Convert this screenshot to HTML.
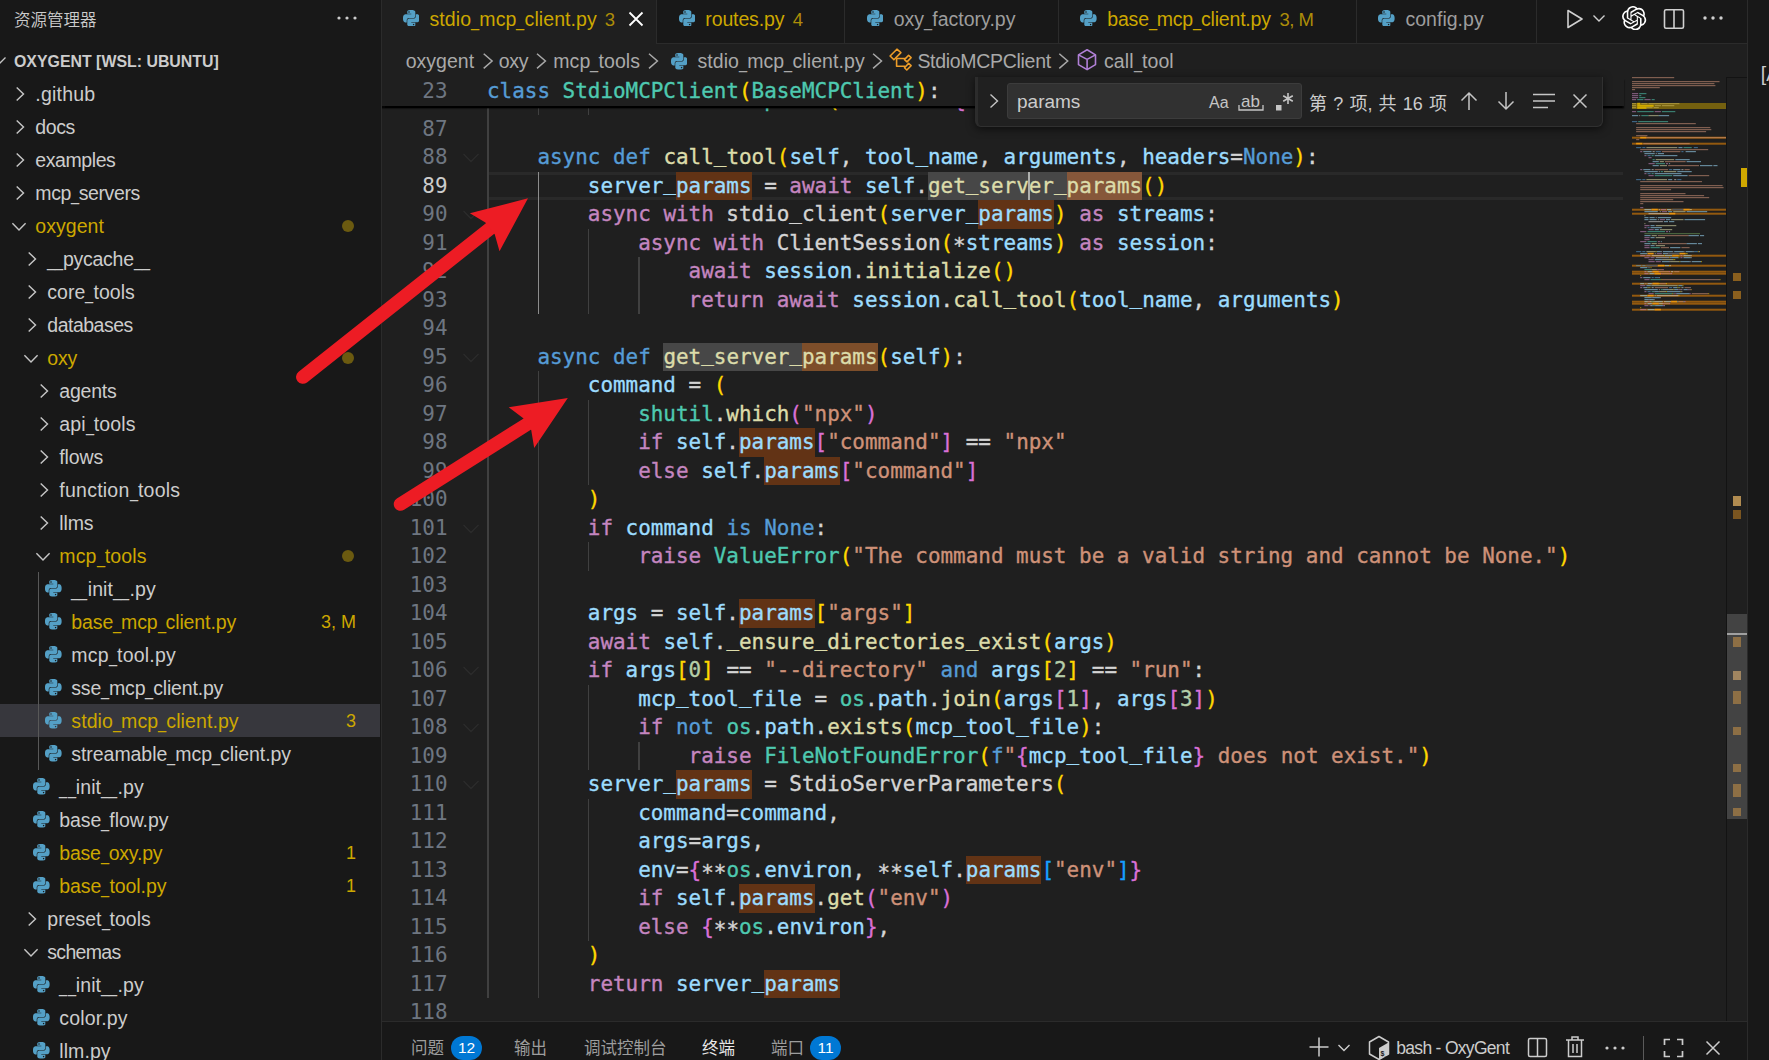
<!DOCTYPE html>
<html lang="zh-CN">
<head>
<meta charset="utf-8">
<title>stdio_mcp_client.py - OxyGent [WSL: Ubuntu] - Visual Studio Code</title>
<style>
*{box-sizing:border-box}
html,body{margin:0;padding:0;background:#181818;overflow:hidden}
body{width:1769px;height:1060px;position:relative;font-family:"Liberation Sans","Noto Sans CJK SC",sans-serif;color:#cccccc;font-size:19px}
.abs{position:absolute}
/* sidebar */
#side{position:absolute;left:0;top:0;width:381px;height:1060px;background:#181818;overflow:hidden}
#sideb{position:absolute;left:381px;top:0;width:1px;height:1060px;background:#2b2b2b;z-index:4}
#side .title{position:absolute;left:14px;top:8.500px;font-size:16.5px;line-height:22px;color:#cccccc;font-weight:350}
#side .more{position:absolute;left:336px;top:16px}
#side .root{position:absolute;left:14px;top:44.5px;height:33px;line-height:33px;font-weight:bold;font-size:15.9px;color:#cccccc;white-space:nowrap}
.row{position:absolute;left:0;width:380px;height:33px;line-height:33px;white-space:nowrap}
.row.sel{background:#37373d}
.row .nm{position:absolute;top:0.5px;font-size:19.5px}
.row .chv{position:absolute;top:6.5px;width:20px;height:20px}
.row .ico{position:absolute;top:8.300px;width:16.6px;height:16.6px}
svg.chev{width:20px;height:20px;display:block}
svg.py{width:16.6px;height:16.6px;display:block}
.row .dot{position:absolute;left:342px;top:10.5px;width:12px;height:12px;border-radius:50%;background:#6b5a10}
.row .bdg{position:absolute;right:24px;top:0.5px;font-size:18px;color:#cca700}
/* editor */
#ed{position:absolute;left:381px;top:0;width:1366px;height:1060px;background:#1f1f1f;overflow:hidden}
#tabs{position:absolute;left:0;top:0;width:1366px;height:44px;background:#181818;border-bottom:1px solid #2b2b2b}
.tab{position:absolute;top:0;height:43px;border-right:1px solid #2b2b2b;white-space:nowrap;font-size:19.5px;line-height:39px}
.tab.active{background:#1f1f1f;height:44px}
.tab .ico{position:absolute;top:9.500px;width:16.6px;height:16.6px}
.tab .lbl{position:absolute;top:0}
#bc{position:absolute;left:0;top:44px;height:33px;line-height:35px;width:1366px;white-space:nowrap;color:#a9a9a9;font-size:19.5px}
#bc>span{position:absolute;top:0}
#sticky{position:absolute;left:0;top:76.5px;width:1243px;height:29.3px;background:#1f1f1f;box-shadow:0 2.5px 1.5px #000000;z-index:3}
.mono{font-family:"DejaVu Sans Mono","Liberation Mono",monospace;font-size:20.93px}
.ln{position:absolute;left:0;width:66.5px;text-align:right;height:28.5px;line-height:28.5px;color:#6e7681;font-family:"DejaVu Sans Mono","Liberation Mono",monospace;font-size:20.93px;}
.ln.act{color:#cccccc}
.cl{position:absolute;left:106px;height:28.5px;line-height:28.5px;white-space:pre;color:#d4d4d4;-webkit-text-stroke:0.35px;font-family:"DejaVu Sans Mono","Liberation Mono",monospace;font-size:20.93px}
.cl span{display:inline-block;height:28.5px;vertical-align:top}
.cl i{font-style:normal;position:relative;top:-2.5px}
.cl b{font-weight:normal;position:relative;top:3.5px}
.hm{background:#623315}
.hw{background:#474747}
.hmw{background:#86573a}
.hmw2{background:#7d4e2a}
.gd{position:absolute;width:1.5px}
#code{position:absolute;left:-381px;top:0;width:1769px;height:1060px}
#code .ln{left:381px}
#code .cl{left:487px}
#curline{position:absolute;left:108px;top:172px;width:1134px;height:28px;border-top:3px solid #292929;border-bottom:3px solid #292929}
/* panel */
#panel{position:absolute;left:0;top:1021px;width:1366px;height:39px;background:#181818;border-top:1px solid #2b2b2b}
#right{position:absolute;left:1747px;top:0;width:22px;height:1060px;background:#181818;border-left:1px solid #2b2b2b}

.bcc{top:7px}
#bc i svg{width:16.6px;height:16.6px;display:block}
#find{position:absolute;left:594px;top:77px;width:628px;height:50px;background:#202020;border:1px solid #303030;border-top:none;border-left:3px solid #2c2c2c;border-radius:0 0 6px 6px;box-shadow:0 2px 8px rgba(0,0,0,.6);z-index:5}
#find .inp{position:absolute;left:29px;top:5.5px;width:295px;height:36.2px;background:#313131;border:1px solid #3c3c3c;border-radius:3px}
#find .q{position:absolute;left:9px;top:0;line-height:35px;font-size:19px;color:#cccccc}
#find .cnt{position:absolute;left:331px;top:0;line-height:54px;font-size:18px;color:#cccccc;white-space:nowrap;word-spacing:1.2px}
#sb{position:absolute;left:1345px;top:76.5px;width:21px;height:944.5px;border-left:1.3px solid #131313;border-top:1.3px solid #131313;z-index:2}
#sb .ov{position:absolute;left:5.700px;width:8px;background:#8a5f1e}
.pt{position:absolute;top:15px;line-height:22px;font-size:16.5px;color:#9d9d9d;white-space:nowrap}
.pb{position:absolute;top:13.500px;width:31px;height:24px;border-radius:12px;background:#0078d4;color:#fff;font-size:15.500px;line-height:24px;text-align:center}
#arrows{position:absolute;left:0;top:0;z-index:10;pointer-events:none}
</style>
</head>
<body>
<div id="side">
  <div class="title">资源管理器</div>
  <svg class="abs" style="left:336px;top:15px" width="22" height="6" viewBox="0 0 22 6"><circle cx="3" cy="3" r="1.600" fill="#cccccc"/><circle cx="11" cy="3" r="1.600" fill="#cccccc"/><circle cx="19" cy="3" r="1.600" fill="#cccccc"/></svg>
  <svg class="abs" style="left:-9px;top:55px" width="16" height="12" viewBox="0 0 16 12"><path d="M1.500 2.500 8 9 14.500 2.500" fill="none" stroke="#c5c5c5" stroke-width="1.300"/></svg>
  <div class="root">OXYGENT [WSL: UBUNTU]</div>
<div class="row" style="top:77px"><span class="chv" style="left:9.5px"><svg class="chev" viewBox="0 0 20 20"><path d="M6.7 3.4 13.5 10 6.7 16.6" fill="none" stroke="#c5c5c5" stroke-width="1.45"/></svg></span><span class="nm" style="left:35.3px;letter-spacing:0.220px;">.github</span></div>
<div class="row" style="top:110px"><span class="chv" style="left:9.5px"><svg class="chev" viewBox="0 0 20 20"><path d="M6.7 3.4 13.5 10 6.7 16.6" fill="none" stroke="#c5c5c5" stroke-width="1.45"/></svg></span><span class="nm" style="left:35.3px;letter-spacing:-0.376px;">docs</span></div>
<div class="row" style="top:143px"><span class="chv" style="left:9.5px"><svg class="chev" viewBox="0 0 20 20"><path d="M6.7 3.4 13.5 10 6.7 16.6" fill="none" stroke="#c5c5c5" stroke-width="1.45"/></svg></span><span class="nm" style="left:35.3px;letter-spacing:-0.421px;">examples</span></div>
<div class="row" style="top:176px"><span class="chv" style="left:9.5px"><svg class="chev" viewBox="0 0 20 20"><path d="M6.7 3.4 13.5 10 6.7 16.6" fill="none" stroke="#c5c5c5" stroke-width="1.45"/></svg></span><span class="nm" style="left:35.3px;letter-spacing:-0.387px;">mcp<span style="display:inline-block;width:8.09px;letter-spacing:0;margin-right:-0.387px;transform:scaleX(0.745);transform-origin:0 0">_</span>servers</span></div>
<div class="row" style="top:209px"><span class="chv" style="left:8.7px"><svg class="chev" viewBox="0 0 20 20"><path d="M3.4 7.3 10 13.9 16.6 7.3" fill="none" stroke="#c5c5c5" stroke-width="1.45"/></svg></span><span class="nm" style="left:35.3px;letter-spacing:0.041px;color:#cca700;">oxygent</span><span class="dot"></span></div>
<div class="row" style="top:242px"><span class="chv" style="left:21.5px"><svg class="chev" viewBox="0 0 20 20"><path d="M6.7 3.4 13.5 10 6.7 16.6" fill="none" stroke="#c5c5c5" stroke-width="1.45"/></svg></span><span class="nm" style="left:47.3px;letter-spacing:-0.259px;"><span style="display:inline-block;width:8.09px;letter-spacing:0;margin-right:-0.259px;transform:scaleX(0.745);transform-origin:0 0">_</span><span style="display:inline-block;width:8.09px;letter-spacing:0;margin-right:-0.259px;transform:scaleX(0.745);transform-origin:0 0">_</span>pycache<span style="display:inline-block;width:8.09px;letter-spacing:0;margin-right:-0.259px;transform:scaleX(0.745);transform-origin:0 0">_</span><span style="display:inline-block;width:8.09px;letter-spacing:0;margin-right:-0.259px;transform:scaleX(0.745);transform-origin:0 0">_</span></span></div>
<div class="row" style="top:275px"><span class="chv" style="left:21.5px"><svg class="chev" viewBox="0 0 20 20"><path d="M6.7 3.4 13.5 10 6.7 16.6" fill="none" stroke="#c5c5c5" stroke-width="1.45"/></svg></span><span class="nm" style="left:47.3px;letter-spacing:0.030px;">core<span style="display:inline-block;width:8.09px;letter-spacing:0;margin-right:0.030px;transform:scaleX(0.745);transform-origin:0 0">_</span>tools</span></div>
<div class="row" style="top:308px"><span class="chv" style="left:21.5px"><svg class="chev" viewBox="0 0 20 20"><path d="M6.7 3.4 13.5 10 6.7 16.6" fill="none" stroke="#c5c5c5" stroke-width="1.45"/></svg></span><span class="nm" style="left:47.3px;letter-spacing:-0.500px;">databases</span></div>
<div class="row" style="top:341px"><span class="chv" style="left:20.7px"><svg class="chev" viewBox="0 0 20 20"><path d="M3.4 7.3 10 13.9 16.6 7.3" fill="none" stroke="#c5c5c5" stroke-width="1.45"/></svg></span><span class="nm" style="left:47.3px;letter-spacing:-0.186px;color:#cca700;">oxy</span><span class="dot"></span></div>
<div class="row" style="top:374px"><span class="chv" style="left:33.5px"><svg class="chev" viewBox="0 0 20 20"><path d="M6.7 3.4 13.5 10 6.7 16.6" fill="none" stroke="#c5c5c5" stroke-width="1.45"/></svg></span><span class="nm" style="left:59.3px;letter-spacing:-0.227px;">agents</span></div>
<div class="row" style="top:407px"><span class="chv" style="left:33.5px"><svg class="chev" viewBox="0 0 20 20"><path d="M6.7 3.4 13.5 10 6.7 16.6" fill="none" stroke="#c5c5c5" stroke-width="1.45"/></svg></span><span class="nm" style="left:59.3px;letter-spacing:0.100px;">api<span style="display:inline-block;width:8.09px;letter-spacing:0;margin-right:0.100px;transform:scaleX(0.745);transform-origin:0 0">_</span>tools</span></div>
<div class="row" style="top:440px"><span class="chv" style="left:33.5px"><svg class="chev" viewBox="0 0 20 20"><path d="M6.7 3.4 13.5 10 6.7 16.6" fill="none" stroke="#c5c5c5" stroke-width="1.45"/></svg></span><span class="nm" style="left:59.3px;letter-spacing:-0.107px;">flows</span></div>
<div class="row" style="top:473px"><span class="chv" style="left:33.5px"><svg class="chev" viewBox="0 0 20 20"><path d="M6.7 3.4 13.5 10 6.7 16.6" fill="none" stroke="#c5c5c5" stroke-width="1.45"/></svg></span><span class="nm" style="left:59.3px;letter-spacing:0.245px;">function<span style="display:inline-block;width:8.09px;letter-spacing:0;margin-right:0.245px;transform:scaleX(0.745);transform-origin:0 0">_</span>tools</span></div>
<div class="row" style="top:506px"><span class="chv" style="left:33.5px"><svg class="chev" viewBox="0 0 20 20"><path d="M6.7 3.4 13.5 10 6.7 16.6" fill="none" stroke="#c5c5c5" stroke-width="1.45"/></svg></span><span class="nm" style="left:59.3px;letter-spacing:-0.143px;">llms</span></div>
<div class="row" style="top:539px"><span class="chv" style="left:32.7px"><svg class="chev" viewBox="0 0 20 20"><path d="M3.4 7.3 10 13.9 16.6 7.3" fill="none" stroke="#c5c5c5" stroke-width="1.45"/></svg></span><span class="nm" style="left:59.3px;letter-spacing:0.144px;color:#cca700;">mcp<span style="display:inline-block;width:8.09px;letter-spacing:0;margin-right:0.144px;transform:scaleX(0.745);transform-origin:0 0">_</span>tools</span><span class="dot"></span></div>
<div class="row" style="top:572px"><span class="ico" style="left:45px"><svg class="py" viewBox="0 0 24 24"><path fill="#54a0c6" d="M14.25.18l.9.2.73.26.59.3.45.32.34.34.25.34.16.33.1.3.04.26.02.2-.01.13V8.5l-.05.63-.13.55-.21.46-.26.38-.3.31-.33.25-.35.19-.35.14-.33.1-.3.07-.26.04-.21.02H8.77l-.69.05-.59.14-.5.22-.41.27-.33.32-.27.35-.2.36-.15.37-.1.35-.07.32-.04.27-.02.21v3.06H3.17l-.21-.03-.28-.07-.32-.12-.35-.18-.36-.26-.36-.36-.35-.46-.32-.59-.28-.73-.21-.88-.14-1.05-.05-1.23.06-1.22.16-1.04.24-.87.32-.71.36-.57.4-.44.42-.33.42-.24.4-.16.36-.1.32-.05.24-.01h.16l.06.01h8.16v-.83H6.18l-.01-2.75-.02-.37.05-.34.11-.31.17-.28.25-.26.31-.23.38-.2.44-.18.51-.15.58-.12.64-.1.71-.06.77-.04.84-.02 1.27.05zm-6.3 1.98l-.23.33-.08.41.08.41.23.34.33.22.41.09.41-.09.33-.22.23-.34.08-.41-.08-.41-.23-.33-.33-.22-.41-.09-.41.09zm13.09 3.95l.28.06.32.12.35.18.36.27.36.35.35.47.32.59.28.73.21.88.14 1.04.05 1.23-.06 1.23-.16 1.04-.24.86-.32.71-.36.57-.4.45-.42.33-.42.24-.4.16-.36.09-.32.05-.24.02-.16-.01h-8.22v.82h5.84l.01 2.76.02.36-.05.34-.11.31-.17.29-.25.25-.31.24-.38.2-.44.17-.51.15-.58.13-.64.09-.71.07-.77.04-.84.01-1.27-.04-1.07-.14-.9-.2-.73-.25-.59-.3-.45-.33-.34-.34-.25-.34-.16-.33-.1-.3-.04-.25-.02-.2.01-.13v-5.34l.05-.64.13-.54.21-.46.26-.38.3-.32.33-.24.35-.2.35-.14.33-.1.3-.06.26-.04.21-.02.13-.01h5.84l.69-.05.59-.14.5-.21.41-.28.33-.32.27-.35.2-.36.15-.36.1-.35.07-.32.04-.28.02-.21V6.07h2.09l.14.01zm-6.47 14.25l-.23.33-.08.41.08.41.23.33.33.23.41.08.41-.08.33-.23.23-.33.08-.41-.08-.41-.23-.33-.33-.23-.41-.08-.41.08z"/></svg></span><span class="nm" style="left:71.3px;letter-spacing:0.122px;"><span style="display:inline-block;width:8.09px;letter-spacing:0;margin-right:0.122px;transform:scaleX(0.745);transform-origin:0 0">_</span><span style="display:inline-block;width:8.09px;letter-spacing:0;margin-right:0.122px;transform:scaleX(0.745);transform-origin:0 0">_</span>init<span style="display:inline-block;width:8.09px;letter-spacing:0;margin-right:0.122px;transform:scaleX(0.745);transform-origin:0 0">_</span><span style="display:inline-block;width:8.09px;letter-spacing:0;margin-right:0.122px;transform:scaleX(0.745);transform-origin:0 0">_</span>.py</span></div>
<div class="row" style="top:605px"><span class="ico" style="left:45px"><svg class="py" viewBox="0 0 24 24"><path fill="#54a0c6" d="M14.25.18l.9.2.73.26.59.3.45.32.34.34.25.34.16.33.1.3.04.26.02.2-.01.13V8.5l-.05.63-.13.55-.21.46-.26.38-.3.31-.33.25-.35.19-.35.14-.33.1-.3.07-.26.04-.21.02H8.77l-.69.05-.59.14-.5.22-.41.27-.33.32-.27.35-.2.36-.15.37-.1.35-.07.32-.04.27-.02.21v3.06H3.17l-.21-.03-.28-.07-.32-.12-.35-.18-.36-.26-.36-.36-.35-.46-.32-.59-.28-.73-.21-.88-.14-1.05-.05-1.23.06-1.22.16-1.04.24-.87.32-.71.36-.57.4-.44.42-.33.42-.24.4-.16.36-.1.32-.05.24-.01h.16l.06.01h8.16v-.83H6.18l-.01-2.75-.02-.37.05-.34.11-.31.17-.28.25-.26.31-.23.38-.2.44-.18.51-.15.58-.12.64-.1.71-.06.77-.04.84-.02 1.27.05zm-6.3 1.98l-.23.33-.08.41.08.41.23.34.33.22.41.09.41-.09.33-.22.23-.34.08-.41-.08-.41-.23-.33-.33-.22-.41-.09-.41.09zm13.09 3.95l.28.06.32.12.35.18.36.27.36.35.35.47.32.59.28.73.21.88.14 1.04.05 1.23-.06 1.23-.16 1.04-.24.86-.32.71-.36.57-.4.45-.42.33-.42.24-.4.16-.36.09-.32.05-.24.02-.16-.01h-8.22v.82h5.84l.01 2.76.02.36-.05.34-.11.31-.17.29-.25.25-.31.24-.38.2-.44.17-.51.15-.58.13-.64.09-.71.07-.77.04-.84.01-1.27-.04-1.07-.14-.9-.2-.73-.25-.59-.3-.45-.33-.34-.34-.25-.34-.16-.33-.1-.3-.04-.25-.02-.2.01-.13v-5.34l.05-.64.13-.54.21-.46.26-.38.3-.32.33-.24.35-.2.35-.14.33-.1.3-.06.26-.04.21-.02.13-.01h5.84l.69-.05.59-.14.5-.21.41-.28.33-.32.27-.35.2-.36.15-.36.1-.35.07-.32.04-.28.02-.21V6.07h2.09l.14.01zm-6.47 14.25l-.23.33-.08.41.08.41.23.33.33.23.41.08.41-.08.33-.23.23-.33.08-.41-.08-.41-.23-.33-.33-.23-.41-.08-.41.08z"/></svg></span><span class="nm" style="left:71.3px;letter-spacing:-0.118px;color:#cca700;">base<span style="display:inline-block;width:8.09px;letter-spacing:0;margin-right:-0.118px;transform:scaleX(0.745);transform-origin:0 0">_</span>mcp<span style="display:inline-block;width:8.09px;letter-spacing:0;margin-right:-0.118px;transform:scaleX(0.745);transform-origin:0 0">_</span>client.py</span><span class="bdg">3, M</span></div>
<div class="row" style="top:638px"><span class="ico" style="left:45px"><svg class="py" viewBox="0 0 24 24"><path fill="#54a0c6" d="M14.25.18l.9.2.73.26.59.3.45.32.34.34.25.34.16.33.1.3.04.26.02.2-.01.13V8.5l-.05.63-.13.55-.21.46-.26.38-.3.31-.33.25-.35.19-.35.14-.33.1-.3.07-.26.04-.21.02H8.77l-.69.05-.59.14-.5.22-.41.27-.33.32-.27.35-.2.36-.15.37-.1.35-.07.32-.04.27-.02.21v3.06H3.17l-.21-.03-.28-.07-.32-.12-.35-.18-.36-.26-.36-.36-.35-.46-.32-.59-.28-.73-.21-.88-.14-1.05-.05-1.23.06-1.22.16-1.04.24-.87.32-.71.36-.57.4-.44.42-.33.42-.24.4-.16.36-.1.32-.05.24-.01h.16l.06.01h8.16v-.83H6.18l-.01-2.75-.02-.37.05-.34.11-.31.17-.28.25-.26.31-.23.38-.2.44-.18.51-.15.58-.12.64-.1.71-.06.77-.04.84-.02 1.27.05zm-6.3 1.98l-.23.33-.08.41.08.41.23.34.33.22.41.09.41-.09.33-.22.23-.34.08-.41-.08-.41-.23-.33-.33-.22-.41-.09-.41.09zm13.09 3.95l.28.06.32.12.35.18.36.27.36.35.35.47.32.59.28.73.21.88.14 1.04.05 1.23-.06 1.23-.16 1.04-.24.86-.32.71-.36.57-.4.45-.42.33-.42.24-.4.16-.36.09-.32.05-.24.02-.16-.01h-8.22v.82h5.84l.01 2.76.02.36-.05.34-.11.31-.17.29-.25.25-.31.24-.38.2-.44.17-.51.15-.58.13-.64.09-.71.07-.77.04-.84.01-1.27-.04-1.07-.14-.9-.2-.73-.25-.59-.3-.45-.33-.34-.34-.25-.34-.16-.33-.1-.3-.04-.25-.02-.2.01-.13v-5.34l.05-.64.13-.54.21-.46.26-.38.3-.32.33-.24.35-.2.35-.14.33-.1.3-.06.26-.04.21-.02.13-.01h5.84l.69-.05.59-.14.5-.21.41-.28.33-.32.27-.35.2-.36.15-.36.1-.35.07-.32.04-.28.02-.21V6.07h2.09l.14.01zm-6.47 14.25l-.23.33-.08.41.08.41.23.33.33.23.41.08.41-.08.33-.23.23-.33.08-.41-.08-.41-.23-.33-.33-.23-.41-.08-.41.08z"/></svg></span><span class="nm" style="left:71.3px;letter-spacing:0.202px;">mcp<span style="display:inline-block;width:8.09px;letter-spacing:0;margin-right:0.202px;transform:scaleX(0.745);transform-origin:0 0">_</span>tool.py</span></div>
<div class="row" style="top:671px"><span class="ico" style="left:45px"><svg class="py" viewBox="0 0 24 24"><path fill="#54a0c6" d="M14.25.18l.9.2.73.26.59.3.45.32.34.34.25.34.16.33.1.3.04.26.02.2-.01.13V8.5l-.05.63-.13.55-.21.46-.26.38-.3.31-.33.25-.35.19-.35.14-.33.1-.3.07-.26.04-.21.02H8.77l-.69.05-.59.14-.5.22-.41.27-.33.32-.27.35-.2.36-.15.37-.1.35-.07.32-.04.27-.02.21v3.06H3.17l-.21-.03-.28-.07-.32-.12-.35-.18-.36-.26-.36-.36-.35-.46-.32-.59-.28-.73-.21-.88-.14-1.05-.05-1.23.06-1.22.16-1.04.24-.87.32-.71.36-.57.4-.44.42-.33.42-.24.4-.16.36-.1.32-.05.24-.01h.16l.06.01h8.16v-.83H6.18l-.01-2.75-.02-.37.05-.34.11-.31.17-.28.25-.26.31-.23.38-.2.44-.18.51-.15.58-.12.64-.1.71-.06.77-.04.84-.02 1.27.05zm-6.3 1.98l-.23.33-.08.41.08.41.23.34.33.22.41.09.41-.09.33-.22.23-.34.08-.41-.08-.41-.23-.33-.33-.22-.41-.09-.41.09zm13.09 3.95l.28.06.32.12.35.18.36.27.36.35.35.47.32.59.28.73.21.88.14 1.04.05 1.23-.06 1.23-.16 1.04-.24.86-.32.71-.36.57-.4.45-.42.33-.42.24-.4.16-.36.09-.32.05-.24.02-.16-.01h-8.22v.82h5.84l.01 2.76.02.36-.05.34-.11.31-.17.29-.25.25-.31.24-.38.2-.44.17-.51.15-.58.13-.64.09-.71.07-.77.04-.84.01-1.27-.04-1.07-.14-.9-.2-.73-.25-.59-.3-.45-.33-.34-.34-.25-.34-.16-.33-.1-.3-.04-.25-.02-.2.01-.13v-5.34l.05-.64.13-.54.21-.46.26-.38.3-.32.33-.24.35-.2.35-.14.33-.1.3-.06.26-.04.21-.02.13-.01h5.84l.69-.05.59-.14.5-.21.41-.28.33-.32.27-.35.2-.36.15-.36.1-.35.07-.32.04-.28.02-.21V6.07h2.09l.14.01zm-6.47 14.25l-.23.33-.08.41.08.41.23.33.33.23.41.08.41-.08.33-.23.23-.33.08-.41-.08-.41-.23-.33-.33-.23-.41-.08-.41.08z"/></svg></span><span class="nm" style="left:71.3px;letter-spacing:-0.182px;">sse<span style="display:inline-block;width:8.09px;letter-spacing:0;margin-right:-0.182px;transform:scaleX(0.745);transform-origin:0 0">_</span>mcp<span style="display:inline-block;width:8.09px;letter-spacing:0;margin-right:-0.182px;transform:scaleX(0.745);transform-origin:0 0">_</span>client.py</span></div>
<div class="row sel" style="top:704px"><span class="ico" style="left:45px"><svg class="py" viewBox="0 0 24 24"><path fill="#54a0c6" d="M14.25.18l.9.2.73.26.59.3.45.32.34.34.25.34.16.33.1.3.04.26.02.2-.01.13V8.5l-.05.63-.13.55-.21.46-.26.38-.3.31-.33.25-.35.19-.35.14-.33.1-.3.07-.26.04-.21.02H8.77l-.69.05-.59.14-.5.22-.41.27-.33.32-.27.35-.2.36-.15.37-.1.35-.07.32-.04.27-.02.21v3.06H3.17l-.21-.03-.28-.07-.32-.12-.35-.18-.36-.26-.36-.36-.35-.46-.32-.59-.28-.73-.21-.88-.14-1.05-.05-1.23.06-1.22.16-1.04.24-.87.32-.71.36-.57.4-.44.42-.33.42-.24.4-.16.36-.1.32-.05.24-.01h.16l.06.01h8.16v-.83H6.18l-.01-2.75-.02-.37.05-.34.11-.31.17-.28.25-.26.31-.23.38-.2.44-.18.51-.15.58-.12.64-.1.71-.06.77-.04.84-.02 1.27.05zm-6.3 1.98l-.23.33-.08.41.08.41.23.34.33.22.41.09.41-.09.33-.22.23-.34.08-.41-.08-.41-.23-.33-.33-.22-.41-.09-.41.09zm13.09 3.95l.28.06.32.12.35.18.36.27.36.35.35.47.32.59.28.73.21.88.14 1.04.05 1.23-.06 1.23-.16 1.04-.24.86-.32.71-.36.57-.4.45-.42.33-.42.24-.4.16-.36.09-.32.05-.24.02-.16-.01h-8.22v.82h5.84l.01 2.76.02.36-.05.34-.11.31-.17.29-.25.25-.31.24-.38.2-.44.17-.51.15-.58.13-.64.09-.71.07-.77.04-.84.01-1.27-.04-1.07-.14-.9-.2-.73-.25-.59-.3-.45-.33-.34-.34-.25-.34-.16-.33-.1-.3-.04-.25-.02-.2.01-.13v-5.34l.05-.64.13-.54.21-.46.26-.38.3-.32.33-.24.35-.2.35-.14.33-.1.3-.06.26-.04.21-.02.13-.01h5.84l.69-.05.59-.14.5-.21.41-.28.33-.32.27-.35.2-.36.15-.36.1-.35.07-.32.04-.28.02-.21V6.07h2.09l.14.01zm-6.47 14.25l-.23.33-.08.41.08.41.23.33.33.23.41.08.41-.08.33-.23.23-.33.08-.41-.08-.41-.23-.33-.33-.23-.41-.08-.41.08z"/></svg></span><span class="nm" style="left:71.3px;letter-spacing:0.088px;color:#cca700;">stdio<span style="display:inline-block;width:8.09px;letter-spacing:0;margin-right:0.088px;transform:scaleX(0.745);transform-origin:0 0">_</span>mcp<span style="display:inline-block;width:8.09px;letter-spacing:0;margin-right:0.088px;transform:scaleX(0.745);transform-origin:0 0">_</span>client.py</span><span class="bdg">3</span></div>
<div class="row" style="top:737px"><span class="ico" style="left:45px"><svg class="py" viewBox="0 0 24 24"><path fill="#54a0c6" d="M14.25.18l.9.2.73.26.59.3.45.32.34.34.25.34.16.33.1.3.04.26.02.2-.01.13V8.5l-.05.63-.13.55-.21.46-.26.38-.3.31-.33.25-.35.19-.35.14-.33.1-.3.07-.26.04-.21.02H8.77l-.69.05-.59.14-.5.22-.41.27-.33.32-.27.35-.2.36-.15.37-.1.35-.07.32-.04.27-.02.21v3.06H3.17l-.21-.03-.28-.07-.32-.12-.35-.18-.36-.26-.36-.36-.35-.46-.32-.59-.28-.73-.21-.88-.14-1.05-.05-1.23.06-1.22.16-1.04.24-.87.32-.71.36-.57.4-.44.42-.33.42-.24.4-.16.36-.1.32-.05.24-.01h.16l.06.01h8.16v-.83H6.18l-.01-2.75-.02-.37.05-.34.11-.31.17-.28.25-.26.31-.23.38-.2.44-.18.51-.15.58-.12.64-.1.71-.06.77-.04.84-.02 1.27.05zm-6.3 1.98l-.23.33-.08.41.08.41.23.34.33.22.41.09.41-.09.33-.22.23-.34.08-.41-.08-.41-.23-.33-.33-.22-.41-.09-.41.09zm13.09 3.95l.28.06.32.12.35.18.36.27.36.35.35.47.32.59.28.73.21.88.14 1.04.05 1.23-.06 1.23-.16 1.04-.24.86-.32.71-.36.57-.4.45-.42.33-.42.24-.4.16-.36.09-.32.05-.24.02-.16-.01h-8.22v.82h5.84l.01 2.76.02.36-.05.34-.11.31-.17.29-.25.25-.31.24-.38.2-.44.17-.51.15-.58.13-.64.09-.71.07-.77.04-.84.01-1.27-.04-1.07-.14-.9-.2-.73-.25-.59-.3-.45-.33-.34-.34-.25-.34-.16-.33-.1-.3-.04-.25-.02-.2.01-.13v-5.34l.05-.64.13-.54.21-.46.26-.38.3-.32.33-.24.35-.2.35-.14.33-.1.3-.06.26-.04.21-.02.13-.01h5.84l.69-.05.59-.14.5-.21.41-.28.33-.32.27-.35.2-.36.15-.36.1-.35.07-.32.04-.28.02-.21V6.07h2.09l.14.01zm-6.47 14.25l-.23.33-.08.41.08.41.23.33.33.23.41.08.41-.08.33-.23.23-.33.08-.41-.08-.41-.23-.33-.33-.23-.41-.08-.41.08z"/></svg></span><span class="nm" style="left:71.3px;letter-spacing:-0.054px;">streamable<span style="display:inline-block;width:8.09px;letter-spacing:0;margin-right:-0.054px;transform:scaleX(0.745);transform-origin:0 0">_</span>mcp<span style="display:inline-block;width:8.09px;letter-spacing:0;margin-right:-0.054px;transform:scaleX(0.745);transform-origin:0 0">_</span>client.py</span></div>
<div class="row" style="top:770px"><span class="ico" style="left:33px"><svg class="py" viewBox="0 0 24 24"><path fill="#54a0c6" d="M14.25.18l.9.2.73.26.59.3.45.32.34.34.25.34.16.33.1.3.04.26.02.2-.01.13V8.5l-.05.63-.13.55-.21.46-.26.38-.3.31-.33.25-.35.19-.35.14-.33.1-.3.07-.26.04-.21.02H8.77l-.69.05-.59.14-.5.22-.41.27-.33.32-.27.35-.2.36-.15.37-.1.35-.07.32-.04.27-.02.21v3.06H3.17l-.21-.03-.28-.07-.32-.12-.35-.18-.36-.26-.36-.36-.35-.46-.32-.59-.28-.73-.21-.88-.14-1.05-.05-1.23.06-1.22.16-1.04.24-.87.32-.71.36-.57.4-.44.42-.33.42-.24.4-.16.36-.1.32-.05.24-.01h.16l.06.01h8.16v-.83H6.18l-.01-2.75-.02-.37.05-.34.11-.31.17-.28.25-.26.31-.23.38-.2.44-.18.51-.15.58-.12.64-.1.71-.06.77-.04.84-.02 1.27.05zm-6.3 1.98l-.23.33-.08.41.08.41.23.34.33.22.41.09.41-.09.33-.22.23-.34.08-.41-.08-.41-.23-.33-.33-.22-.41-.09-.41.09zm13.09 3.95l.28.06.32.12.35.18.36.27.36.35.35.47.32.59.28.73.21.88.14 1.04.05 1.23-.06 1.23-.16 1.04-.24.86-.32.71-.36.57-.4.45-.42.33-.42.24-.4.16-.36.09-.32.05-.24.02-.16-.01h-8.22v.82h5.84l.01 2.76.02.36-.05.34-.11.31-.17.29-.25.25-.31.24-.38.2-.44.17-.51.15-.58.13-.64.09-.71.07-.77.04-.84.01-1.27-.04-1.07-.14-.9-.2-.73-.25-.59-.3-.45-.33-.34-.34-.25-.34-.16-.33-.1-.3-.04-.25-.02-.2.01-.13v-5.34l.05-.64.13-.54.21-.46.26-.38.3-.32.33-.24.35-.2.35-.14.33-.1.3-.06.26-.04.21-.02.13-.01h5.84l.69-.05.59-.14.5-.21.41-.28.33-.32.27-.35.2-.36.15-.36.1-.35.07-.32.04-.28.02-.21V6.07h2.09l.14.01zm-6.47 14.25l-.23.33-.08.41.08.41.23.33.33.23.41.08.41-.08.33-.23.23-.33.08-.41-.08-.41-.23-.33-.33-.23-.41-.08-.41.08z"/></svg></span><span class="nm" style="left:59.3px;letter-spacing:0.131px;"><span style="display:inline-block;width:8.09px;letter-spacing:0;margin-right:0.131px;transform:scaleX(0.745);transform-origin:0 0">_</span><span style="display:inline-block;width:8.09px;letter-spacing:0;margin-right:0.131px;transform:scaleX(0.745);transform-origin:0 0">_</span>init<span style="display:inline-block;width:8.09px;letter-spacing:0;margin-right:0.131px;transform:scaleX(0.745);transform-origin:0 0">_</span><span style="display:inline-block;width:8.09px;letter-spacing:0;margin-right:0.131px;transform:scaleX(0.745);transform-origin:0 0">_</span>.py</span></div>
<div class="row" style="top:803px"><span class="ico" style="left:33px"><svg class="py" viewBox="0 0 24 24"><path fill="#54a0c6" d="M14.25.18l.9.2.73.26.59.3.45.32.34.34.25.34.16.33.1.3.04.26.02.2-.01.13V8.5l-.05.63-.13.55-.21.46-.26.38-.3.31-.33.25-.35.19-.35.14-.33.1-.3.07-.26.04-.21.02H8.77l-.69.05-.59.14-.5.22-.41.27-.33.32-.27.35-.2.36-.15.37-.1.35-.07.32-.04.27-.02.21v3.06H3.17l-.21-.03-.28-.07-.32-.12-.35-.18-.36-.26-.36-.36-.35-.46-.32-.59-.28-.73-.21-.88-.14-1.05-.05-1.23.06-1.22.16-1.04.24-.87.32-.71.36-.57.4-.44.42-.33.42-.24.4-.16.36-.1.32-.05.24-.01h.16l.06.01h8.16v-.83H6.18l-.01-2.75-.02-.37.05-.34.11-.31.17-.28.25-.26.31-.23.38-.2.44-.18.51-.15.58-.12.64-.1.71-.06.77-.04.84-.02 1.27.05zm-6.3 1.98l-.23.33-.08.41.08.41.23.34.33.22.41.09.41-.09.33-.22.23-.34.08-.41-.08-.41-.23-.33-.33-.22-.41-.09-.41.09zm13.09 3.95l.28.06.32.12.35.18.36.27.36.35.35.47.32.59.28.73.21.88.14 1.04.05 1.23-.06 1.23-.16 1.04-.24.86-.32.71-.36.57-.4.45-.42.33-.42.24-.4.16-.36.09-.32.05-.24.02-.16-.01h-8.22v.82h5.84l.01 2.76.02.36-.05.34-.11.31-.17.29-.25.25-.31.24-.38.2-.44.17-.51.15-.58.13-.64.09-.71.07-.77.04-.84.01-1.27-.04-1.07-.14-.9-.2-.73-.25-.59-.3-.45-.33-.34-.34-.25-.34-.16-.33-.1-.3-.04-.25-.02-.2.01-.13v-5.34l.05-.64.13-.54.21-.46.26-.38.3-.32.33-.24.35-.2.35-.14.33-.1.3-.06.26-.04.21-.02.13-.01h5.84l.69-.05.59-.14.5-.21.41-.28.33-.32.27-.35.2-.36.15-.36.1-.35.07-.32.04-.28.02-.21V6.07h2.09l.14.01zm-6.47 14.25l-.23.33-.08.41.08.41.23.33.33.23.41.08.41-.08.33-.23.23-.33.08-.41-.08-.41-.23-.33-.33-.23-.41-.08-.41.08z"/></svg></span><span class="nm" style="left:59.3px;letter-spacing:-0.074px;">base<span style="display:inline-block;width:8.09px;letter-spacing:0;margin-right:-0.074px;transform:scaleX(0.745);transform-origin:0 0">_</span>flow.py</span></div>
<div class="row" style="top:836px"><span class="ico" style="left:33px"><svg class="py" viewBox="0 0 24 24"><path fill="#54a0c6" d="M14.25.18l.9.2.73.26.59.3.45.32.34.34.25.34.16.33.1.3.04.26.02.2-.01.13V8.5l-.05.63-.13.55-.21.46-.26.38-.3.31-.33.25-.35.19-.35.14-.33.1-.3.07-.26.04-.21.02H8.77l-.69.05-.59.14-.5.22-.41.27-.33.32-.27.35-.2.36-.15.37-.1.35-.07.32-.04.27-.02.21v3.06H3.17l-.21-.03-.28-.07-.32-.12-.35-.18-.36-.26-.36-.36-.35-.46-.32-.59-.28-.73-.21-.88-.14-1.05-.05-1.23.06-1.22.16-1.04.24-.87.32-.71.36-.57.4-.44.42-.33.42-.24.4-.16.36-.1.32-.05.24-.01h.16l.06.01h8.16v-.83H6.18l-.01-2.75-.02-.37.05-.34.11-.31.17-.28.25-.26.31-.23.38-.2.44-.18.51-.15.58-.12.64-.1.71-.06.77-.04.84-.02 1.27.05zm-6.3 1.98l-.23.33-.08.41.08.41.23.34.33.22.41.09.41-.09.33-.22.23-.34.08-.41-.08-.41-.23-.33-.33-.22-.41-.09-.41.09zm13.09 3.95l.28.06.32.12.35.18.36.27.36.35.35.47.32.59.28.73.21.88.14 1.04.05 1.23-.06 1.23-.16 1.04-.24.86-.32.71-.36.57-.4.45-.42.33-.42.24-.4.16-.36.09-.32.05-.24.02-.16-.01h-8.22v.82h5.84l.01 2.76.02.36-.05.34-.11.31-.17.29-.25.25-.31.24-.38.2-.44.17-.51.15-.58.13-.64.09-.71.07-.77.04-.84.01-1.27-.04-1.07-.14-.9-.2-.73-.25-.59-.3-.45-.33-.34-.34-.25-.34-.16-.33-.1-.3-.04-.25-.02-.2.01-.13v-5.34l.05-.64.13-.54.21-.46.26-.38.3-.32.33-.24.35-.2.35-.14.33-.1.3-.06.26-.04.21-.02.13-.01h5.84l.69-.05.59-.14.5-.21.41-.28.33-.32.27-.35.2-.36.15-.36.1-.35.07-.32.04-.28.02-.21V6.07h2.09l.14.01zm-6.47 14.25l-.23.33-.08.41.08.41.23.33.33.23.41.08.41-.08.33-.23.23-.33.08-.41-.08-.41-.23-.33-.33-.23-.41-.08-.41.08z"/></svg></span><span class="nm" style="left:59.3px;letter-spacing:-0.207px;color:#cca700;">base<span style="display:inline-block;width:8.09px;letter-spacing:0;margin-right:-0.207px;transform:scaleX(0.745);transform-origin:0 0">_</span>oxy.py</span><span class="bdg">1</span></div>
<div class="row" style="top:869px"><span class="ico" style="left:33px"><svg class="py" viewBox="0 0 24 24"><path fill="#54a0c6" d="M14.25.18l.9.2.73.26.59.3.45.32.34.34.25.34.16.33.1.3.04.26.02.2-.01.13V8.5l-.05.63-.13.55-.21.46-.26.38-.3.31-.33.25-.35.19-.35.14-.33.1-.3.07-.26.04-.21.02H8.77l-.69.05-.59.14-.5.22-.41.27-.33.32-.27.35-.2.36-.15.37-.1.35-.07.32-.04.27-.02.21v3.06H3.17l-.21-.03-.28-.07-.32-.12-.35-.18-.36-.26-.36-.36-.35-.46-.32-.59-.28-.73-.21-.88-.14-1.05-.05-1.23.06-1.22.16-1.04.24-.87.32-.71.36-.57.4-.44.42-.33.42-.24.4-.16.36-.1.32-.05.24-.01h.16l.06.01h8.16v-.83H6.18l-.01-2.75-.02-.37.05-.34.11-.31.17-.28.25-.26.31-.23.38-.2.44-.18.51-.15.58-.12.64-.1.71-.06.77-.04.84-.02 1.27.05zm-6.3 1.98l-.23.33-.08.41.08.41.23.34.33.22.41.09.41-.09.33-.22.23-.34.08-.41-.08-.41-.23-.33-.33-.22-.41-.09-.41.09zm13.09 3.95l.28.06.32.12.35.18.36.27.36.35.35.47.32.59.28.73.21.88.14 1.04.05 1.23-.06 1.23-.16 1.04-.24.86-.32.71-.36.57-.4.45-.42.33-.42.24-.4.16-.36.09-.32.05-.24.02-.16-.01h-8.22v.82h5.84l.01 2.76.02.36-.05.34-.11.31-.17.29-.25.25-.31.24-.38.2-.44.17-.51.15-.58.13-.64.09-.71.07-.77.04-.84.01-1.27-.04-1.07-.14-.9-.2-.73-.25-.59-.3-.45-.33-.34-.34-.25-.34-.16-.33-.1-.3-.04-.25-.02-.2.01-.13v-5.34l.05-.64.13-.54.21-.46.26-.38.3-.32.33-.24.35-.2.35-.14.33-.1.3-.06.26-.04.21-.02.13-.01h5.84l.69-.05.59-.14.5-.21.41-.28.33-.32.27-.35.2-.36.15-.36.1-.35.07-.32.04-.28.02-.21V6.07h2.09l.14.01zm-6.47 14.25l-.23.33-.08.41.08.41.23.33.33.23.41.08.41-.08.33-.23.23-.33.08-.41-.08-.41-.23-.33-.33-.23-.41-.08-.41.08z"/></svg></span><span class="nm" style="left:59.3px;letter-spacing:-0.061px;color:#cca700;">base<span style="display:inline-block;width:8.09px;letter-spacing:0;margin-right:-0.061px;transform:scaleX(0.745);transform-origin:0 0">_</span>tool.py</span><span class="bdg">1</span></div>
<div class="row" style="top:902px"><span class="chv" style="left:21.5px"><svg class="chev" viewBox="0 0 20 20"><path d="M6.7 3.4 13.5 10 6.7 16.6" fill="none" stroke="#c5c5c5" stroke-width="1.45"/></svg></span><span class="nm" style="left:47.3px;letter-spacing:0.003px;">preset<span style="display:inline-block;width:8.09px;letter-spacing:0;margin-right:0.003px;transform:scaleX(0.745);transform-origin:0 0">_</span>tools</span></div>
<div class="row" style="top:935px"><span class="chv" style="left:20.7px"><svg class="chev" viewBox="0 0 20 20"><path d="M3.4 7.3 10 13.9 16.6 7.3" fill="none" stroke="#c5c5c5" stroke-width="1.45"/></svg></span><span class="nm" style="left:47.3px;letter-spacing:-0.690px;">schemas</span></div>
<div class="row" style="top:968px"><span class="ico" style="left:33px"><svg class="py" viewBox="0 0 24 24"><path fill="#54a0c6" d="M14.25.18l.9.2.73.26.59.3.45.32.34.34.25.34.16.33.1.3.04.26.02.2-.01.13V8.5l-.05.63-.13.55-.21.46-.26.38-.3.31-.33.25-.35.19-.35.14-.33.1-.3.07-.26.04-.21.02H8.77l-.69.05-.59.14-.5.22-.41.27-.33.32-.27.35-.2.36-.15.37-.1.35-.07.32-.04.27-.02.21v3.06H3.17l-.21-.03-.28-.07-.32-.12-.35-.18-.36-.26-.36-.36-.35-.46-.32-.59-.28-.73-.21-.88-.14-1.05-.05-1.23.06-1.22.16-1.04.24-.87.32-.71.36-.57.4-.44.42-.33.42-.24.4-.16.36-.1.32-.05.24-.01h.16l.06.01h8.16v-.83H6.18l-.01-2.75-.02-.37.05-.34.11-.31.17-.28.25-.26.31-.23.38-.2.44-.18.51-.15.58-.12.64-.1.71-.06.77-.04.84-.02 1.27.05zm-6.3 1.98l-.23.33-.08.41.08.41.23.34.33.22.41.09.41-.09.33-.22.23-.34.08-.41-.08-.41-.23-.33-.33-.22-.41-.09-.41.09zm13.09 3.95l.28.06.32.12.35.18.36.27.36.35.35.47.32.59.28.73.21.88.14 1.04.05 1.23-.06 1.23-.16 1.04-.24.86-.32.71-.36.57-.4.45-.42.33-.42.24-.4.16-.36.09-.32.05-.24.02-.16-.01h-8.22v.82h5.84l.01 2.76.02.36-.05.34-.11.31-.17.29-.25.25-.31.24-.38.2-.44.17-.51.15-.58.13-.64.09-.71.07-.77.04-.84.01-1.27-.04-1.07-.14-.9-.2-.73-.25-.59-.3-.45-.33-.34-.34-.25-.34-.16-.33-.1-.3-.04-.25-.02-.2.01-.13v-5.34l.05-.64.13-.54.21-.46.26-.38.3-.32.33-.24.35-.2.35-.14.33-.1.3-.06.26-.04.21-.02.13-.01h5.84l.69-.05.59-.14.5-.21.41-.28.33-.32.27-.35.2-.36.15-.36.1-.35.07-.32.04-.28.02-.21V6.07h2.09l.14.01zm-6.47 14.25l-.23.33-.08.41.08.41.23.33.33.23.41.08.41-.08.33-.23.23-.33.08-.41-.08-.41-.23-.33-.33-.23-.41-.08-.41.08z"/></svg></span><span class="nm" style="left:59.3px;letter-spacing:0.131px;"><span style="display:inline-block;width:8.09px;letter-spacing:0;margin-right:0.131px;transform:scaleX(0.745);transform-origin:0 0">_</span><span style="display:inline-block;width:8.09px;letter-spacing:0;margin-right:0.131px;transform:scaleX(0.745);transform-origin:0 0">_</span>init<span style="display:inline-block;width:8.09px;letter-spacing:0;margin-right:0.131px;transform:scaleX(0.745);transform-origin:0 0">_</span><span style="display:inline-block;width:8.09px;letter-spacing:0;margin-right:0.131px;transform:scaleX(0.745);transform-origin:0 0">_</span>.py</span></div>
<div class="row" style="top:1001px"><span class="ico" style="left:33px"><svg class="py" viewBox="0 0 24 24"><path fill="#54a0c6" d="M14.25.18l.9.2.73.26.59.3.45.32.34.34.25.34.16.33.1.3.04.26.02.2-.01.13V8.5l-.05.63-.13.55-.21.46-.26.38-.3.31-.33.25-.35.19-.35.14-.33.1-.3.07-.26.04-.21.02H8.77l-.69.05-.59.14-.5.22-.41.27-.33.32-.27.35-.2.36-.15.37-.1.35-.07.32-.04.27-.02.21v3.06H3.17l-.21-.03-.28-.07-.32-.12-.35-.18-.36-.26-.36-.36-.35-.46-.32-.59-.28-.73-.21-.88-.14-1.05-.05-1.23.06-1.22.16-1.04.24-.87.32-.71.36-.57.4-.44.42-.33.42-.24.4-.16.36-.1.32-.05.24-.01h.16l.06.01h8.16v-.83H6.18l-.01-2.75-.02-.37.05-.34.11-.31.17-.28.25-.26.31-.23.38-.2.44-.18.51-.15.58-.12.64-.1.71-.06.77-.04.84-.02 1.27.05zm-6.3 1.98l-.23.33-.08.41.08.41.23.34.33.22.41.09.41-.09.33-.22.23-.34.08-.41-.08-.41-.23-.33-.33-.22-.41-.09-.41.09zm13.09 3.95l.28.06.32.12.35.18.36.27.36.35.35.47.32.59.28.73.21.88.14 1.04.05 1.23-.06 1.23-.16 1.04-.24.86-.32.71-.36.57-.4.45-.42.33-.42.24-.4.16-.36.09-.32.05-.24.02-.16-.01h-8.22v.82h5.84l.01 2.76.02.36-.05.34-.11.31-.17.29-.25.25-.31.24-.38.2-.44.17-.51.15-.58.13-.64.09-.71.07-.77.04-.84.01-1.27-.04-1.07-.14-.9-.2-.73-.25-.59-.3-.45-.33-.34-.34-.25-.34-.16-.33-.1-.3-.04-.25-.02-.2.01-.13v-5.34l.05-.64.13-.54.21-.46.26-.38.3-.32.33-.24.35-.2.35-.14.33-.1.3-.06.26-.04.21-.02.13-.01h5.84l.69-.05.59-.14.5-.21.41-.28.33-.32.27-.35.2-.36.15-.36.1-.35.07-.32.04-.28.02-.21V6.07h2.09l.14.01zm-6.47 14.25l-.23.33-.08.41.08.41.23.33.33.23.41.08.41-.08.33-.23.23-.33.08-.41-.08-.41-.23-.33-.33-.23-.41-.08-.41.08z"/></svg></span><span class="nm" style="left:59.3px;letter-spacing:0.150px;">color.py</span></div>
<div class="row" style="top:1034px"><span class="ico" style="left:33px"><svg class="py" viewBox="0 0 24 24"><path fill="#54a0c6" d="M14.25.18l.9.2.73.26.59.3.45.32.34.34.25.34.16.33.1.3.04.26.02.2-.01.13V8.5l-.05.63-.13.55-.21.46-.26.38-.3.31-.33.25-.35.19-.35.14-.33.1-.3.07-.26.04-.21.02H8.77l-.69.05-.59.14-.5.22-.41.27-.33.32-.27.35-.2.36-.15.37-.1.35-.07.32-.04.27-.02.21v3.06H3.17l-.21-.03-.28-.07-.32-.12-.35-.18-.36-.26-.36-.36-.35-.46-.32-.59-.28-.73-.21-.88-.14-1.05-.05-1.23.06-1.22.16-1.04.24-.87.32-.71.36-.57.4-.44.42-.33.42-.24.4-.16.36-.1.32-.05.24-.01h.16l.06.01h8.16v-.83H6.18l-.01-2.75-.02-.37.05-.34.11-.31.17-.28.25-.26.31-.23.38-.2.44-.18.51-.15.58-.12.64-.1.71-.06.77-.04.84-.02 1.27.05zm-6.3 1.98l-.23.33-.08.41.08.41.23.34.33.22.41.09.41-.09.33-.22.23-.34.08-.41-.08-.41-.23-.33-.33-.22-.41-.09-.41.09zm13.09 3.95l.28.06.32.12.35.18.36.27.36.35.35.47.32.59.28.73.21.88.14 1.04.05 1.23-.06 1.23-.16 1.04-.24.86-.32.71-.36.57-.4.45-.42.33-.42.24-.4.16-.36.09-.32.05-.24.02-.16-.01h-8.22v.82h5.84l.01 2.76.02.36-.05.34-.11.31-.17.29-.25.25-.31.24-.38.2-.44.17-.51.15-.58.13-.64.09-.71.07-.77.04-.84.01-1.27-.04-1.07-.14-.9-.2-.73-.25-.59-.3-.45-.33-.34-.34-.25-.34-.16-.33-.1-.3-.04-.25-.02-.2.01-.13v-5.34l.05-.64.13-.54.21-.46.26-.38.3-.32.33-.24.35-.2.35-.14.33-.1.3-.06.26-.04.21-.02.13-.01h5.84l.69-.05.59-.14.5-.21.41-.28.33-.32.27-.35.2-.36.15-.36.1-.35.07-.32.04-.28.02-.21V6.07h2.09l.14.01zm-6.47 14.25l-.23.33-.08.41.08.41.23.33.33.23.41.08.41-.08.33-.23.23-.33.08-.41-.08-.41-.23-.33-.33-.23-.41-.08-.41.08z"/></svg></span><span class="nm" style="left:59.3px;letter-spacing:0.080px;">llm.py</span></div>
<div class="abs" style="left:38px;top:572px;width:1px;height:197.5px;background:#585858"></div>
</div>
<div id="sideb"></div>
<div id="ed">
  <div id="tabs">
<div class="tab active" style="left:0px;width:276px"><span class="ico" style="left:21.6px"><svg class="py" viewBox="0 0 24 24"><path fill="#54a0c6" d="M14.25.18l.9.2.73.26.59.3.45.32.34.34.25.34.16.33.1.3.04.26.02.2-.01.13V8.5l-.05.63-.13.55-.21.46-.26.38-.3.31-.33.25-.35.19-.35.14-.33.1-.3.07-.26.04-.21.02H8.77l-.69.05-.59.14-.5.22-.41.27-.33.32-.27.35-.2.36-.15.37-.1.35-.07.32-.04.27-.02.21v3.06H3.17l-.21-.03-.28-.07-.32-.12-.35-.18-.36-.26-.36-.36-.35-.46-.32-.59-.28-.73-.21-.88-.14-1.05-.05-1.23.06-1.22.16-1.04.24-.87.32-.71.36-.57.4-.44.42-.33.42-.24.4-.16.36-.1.32-.05.24-.01h.16l.06.01h8.16v-.83H6.18l-.01-2.75-.02-.37.05-.34.11-.31.17-.28.25-.26.31-.23.38-.2.44-.18.51-.15.58-.12.64-.1.71-.06.77-.04.84-.02 1.27.05zm-6.3 1.98l-.23.33-.08.41.08.41.23.34.33.22.41.09.41-.09.33-.22.23-.34.08-.41-.08-.41-.23-.33-.33-.22-.41-.09-.41.09zm13.09 3.95l.28.06.32.12.35.18.36.27.36.35.35.47.32.59.28.73.21.88.14 1.04.05 1.23-.06 1.23-.16 1.04-.24.86-.32.71-.36.57-.4.45-.42.33-.42.24-.4.16-.36.09-.32.05-.24.02-.16-.01h-8.22v.82h5.84l.01 2.76.02.36-.05.34-.11.31-.17.29-.25.25-.31.24-.38.2-.44.17-.51.15-.58.13-.64.09-.71.07-.77.04-.84.01-1.27-.04-1.07-.14-.9-.2-.73-.25-.59-.3-.45-.33-.34-.34-.25-.34-.16-.33-.1-.3-.04-.25-.02-.2.01-.13v-5.34l.05-.64.13-.54.21-.46.26-.38.3-.32.33-.24.35-.2.35-.14.33-.1.3-.06.26-.04.21-.02.13-.01h5.84l.69-.05.59-.14.5-.21.41-.28.33-.32.27-.35.2-.36.15-.36.1-.35.07-.32.04-.28.02-.21V6.07h2.09l.14.01zm-6.47 14.25l-.23.33-.08.41.08.41.23.33.33.23.41.08.41-.08.33-.23.23-.33.08-.41-.08-.41-.23-.33-.33-.23-.41-.08-.41.08z"/></svg></span><span class="lbl" style="left:48.5px;color:#cca700;letter-spacing:0.088px">stdio<span style="display:inline-block;width:8.09px;letter-spacing:0;margin-right:0.088px;transform:scaleX(0.745);transform-origin:0 0">_</span>mcp<span style="display:inline-block;width:8.09px;letter-spacing:0;margin-right:0.088px;transform:scaleX(0.745);transform-origin:0 0">_</span>client.py</span><span class="lbl" style="left:223.8px;color:#ad8d08;font-size:18.5px;letter-spacing:-0.797px">3</span><svg class="abs" style="left:246px;top:10px" width="18" height="18" viewBox="0 0 18 18"><path d="M2.5 2.5 15.5 15.5M15.5 2.5 2.5 15.5" stroke="#ffffff" stroke-width="1.8" fill="none"/></svg></div>
<div class="tab" style="left:276px;width:187.5px"><span class="ico" style="left:21.7px"><svg class="py" viewBox="0 0 24 24"><path fill="#54a0c6" d="M14.25.18l.9.2.73.26.59.3.45.32.34.34.25.34.16.33.1.3.04.26.02.2-.01.13V8.5l-.05.63-.13.55-.21.46-.26.38-.3.31-.33.25-.35.19-.35.14-.33.1-.3.07-.26.04-.21.02H8.77l-.69.05-.59.14-.5.22-.41.27-.33.32-.27.35-.2.36-.15.37-.1.35-.07.32-.04.27-.02.21v3.06H3.17l-.21-.03-.28-.07-.32-.12-.35-.18-.36-.26-.36-.36-.35-.46-.32-.59-.28-.73-.21-.88-.14-1.05-.05-1.23.06-1.22.16-1.04.24-.87.32-.71.36-.57.4-.44.42-.33.42-.24.4-.16.36-.1.32-.05.24-.01h.16l.06.01h8.16v-.83H6.18l-.01-2.75-.02-.37.05-.34.11-.31.17-.28.25-.26.31-.23.38-.2.44-.18.51-.15.58-.12.64-.1.71-.06.77-.04.84-.02 1.27.05zm-6.3 1.98l-.23.33-.08.41.08.41.23.34.33.22.41.09.41-.09.33-.22.23-.34.08-.41-.08-.41-.23-.33-.33-.22-.41-.09-.41.09zm13.09 3.95l.28.06.32.12.35.18.36.27.36.35.35.47.32.59.28.73.21.88.14 1.04.05 1.23-.06 1.23-.16 1.04-.24.86-.32.71-.36.57-.4.45-.42.33-.42.24-.4.16-.36.09-.32.05-.24.02-.16-.01h-8.22v.82h5.84l.01 2.76.02.36-.05.34-.11.31-.17.29-.25.25-.31.24-.38.2-.44.17-.51.15-.58.13-.64.09-.71.07-.77.04-.84.01-1.27-.04-1.07-.14-.9-.2-.73-.25-.59-.3-.45-.33-.34-.34-.25-.34-.16-.33-.1-.3-.04-.25-.02-.2.01-.13v-5.34l.05-.64.13-.54.21-.46.26-.38.3-.32.33-.24.35-.2.35-.14.33-.1.3-.06.26-.04.21-.02.13-.01h5.84l.69-.05.59-.14.5-.21.41-.28.33-.32.27-.35.2-.36.15-.36.1-.35.07-.32.04-.28.02-.21V6.07h2.09l.14.01zm-6.47 14.25l-.23.33-.08.41.08.41.23.33.33.23.41.08.41-.08.33-.23.23-.33.08-.41-.08-.41-.23-.33-.33-.23-.41-.08-.41.08z"/></svg></span><span class="lbl" style="left:48.3px;color:#cca700;letter-spacing:-0.124px">routes.py</span><span class="lbl" style="left:135.7px;color:#ad8d08;font-size:18.5px;letter-spacing:-1.197px">4</span></div>
<div class="tab" style="left:463.5px;width:214.5px"><span class="ico" style="left:22.2px"><svg class="py" viewBox="0 0 24 24"><path fill="#54a0c6" d="M14.25.18l.9.2.73.26.59.3.45.32.34.34.25.34.16.33.1.3.04.26.02.2-.01.13V8.5l-.05.63-.13.55-.21.46-.26.38-.3.31-.33.25-.35.19-.35.14-.33.1-.3.07-.26.04-.21.02H8.77l-.69.05-.59.14-.5.22-.41.27-.33.32-.27.35-.2.36-.15.37-.1.35-.07.32-.04.27-.02.21v3.06H3.17l-.21-.03-.28-.07-.32-.12-.35-.18-.36-.26-.36-.36-.35-.46-.32-.59-.28-.73-.21-.88-.14-1.05-.05-1.23.06-1.22.16-1.04.24-.87.32-.71.36-.57.4-.44.42-.33.42-.24.4-.16.36-.1.32-.05.24-.01h.16l.06.01h8.16v-.83H6.18l-.01-2.75-.02-.37.05-.34.11-.31.17-.28.25-.26.31-.23.38-.2.44-.18.51-.15.58-.12.64-.1.71-.06.77-.04.84-.02 1.27.05zm-6.3 1.98l-.23.33-.08.41.08.41.23.34.33.22.41.09.41-.09.33-.22.23-.34.08-.41-.08-.41-.23-.33-.33-.22-.41-.09-.41.09zm13.09 3.95l.28.06.32.12.35.18.36.27.36.35.35.47.32.59.28.73.21.88.14 1.04.05 1.23-.06 1.23-.16 1.04-.24.86-.32.71-.36.57-.4.45-.42.33-.42.24-.4.16-.36.09-.32.05-.24.02-.16-.01h-8.22v.82h5.84l.01 2.76.02.36-.05.34-.11.31-.17.29-.25.25-.31.24-.38.2-.44.17-.51.15-.58.13-.64.09-.71.07-.77.04-.84.01-1.27-.04-1.07-.14-.9-.2-.73-.25-.59-.3-.45-.33-.34-.34-.25-.34-.16-.33-.1-.3-.04-.25-.02-.2.01-.13v-5.34l.05-.64.13-.54.21-.46.26-.38.3-.32.33-.24.35-.2.35-.14.33-.1.3-.06.26-.04.21-.02.13-.01h5.84l.69-.05.59-.14.5-.21.41-.28.33-.32.27-.35.2-.36.15-.36.1-.35.07-.32.04-.28.02-.21V6.07h2.09l.14.01zm-6.47 14.25l-.23.33-.08.41.08.41.23.33.33.23.41.08.41-.08.33-.23.23-.33.08-.41-.08-.41-.23-.33-.33-.23-.41-.08-.41.08z"/></svg></span><span class="lbl" style="left:49.2px;color:#9d9d9d;letter-spacing:0.020px">oxy<span style="display:inline-block;width:8.09px;letter-spacing:0;margin-right:0.020px;transform:scaleX(0.745);transform-origin:0 0">_</span>factory.py</span></div>
<div class="tab" style="left:678px;width:298px"><span class="ico" style="left:21.2px"><svg class="py" viewBox="0 0 24 24"><path fill="#54a0c6" d="M14.25.18l.9.2.73.26.59.3.45.32.34.34.25.34.16.33.1.3.04.26.02.2-.01.13V8.5l-.05.63-.13.55-.21.46-.26.38-.3.31-.33.25-.35.19-.35.14-.33.1-.3.07-.26.04-.21.02H8.77l-.69.05-.59.14-.5.22-.41.27-.33.32-.27.35-.2.36-.15.37-.1.35-.07.32-.04.27-.02.21v3.06H3.17l-.21-.03-.28-.07-.32-.12-.35-.18-.36-.26-.36-.36-.35-.46-.32-.59-.28-.73-.21-.88-.14-1.05-.05-1.23.06-1.22.16-1.04.24-.87.32-.71.36-.57.4-.44.42-.33.42-.24.4-.16.36-.1.32-.05.24-.01h.16l.06.01h8.16v-.83H6.18l-.01-2.75-.02-.37.05-.34.11-.31.17-.28.25-.26.31-.23.38-.2.44-.18.51-.15.58-.12.64-.1.71-.06.77-.04.84-.02 1.27.05zm-6.3 1.98l-.23.33-.08.41.08.41.23.34.33.22.41.09.41-.09.33-.22.23-.34.08-.41-.08-.41-.23-.33-.33-.22-.41-.09-.41.09zm13.09 3.95l.28.06.32.12.35.18.36.27.36.35.35.47.32.59.28.73.21.88.14 1.04.05 1.23-.06 1.23-.16 1.04-.24.86-.32.71-.36.57-.4.45-.42.33-.42.24-.4.16-.36.09-.32.05-.24.02-.16-.01h-8.22v.82h5.84l.01 2.76.02.36-.05.34-.11.31-.17.29-.25.25-.31.24-.38.2-.44.17-.51.15-.58.13-.64.09-.71.07-.77.04-.84.01-1.27-.04-1.07-.14-.9-.2-.73-.25-.59-.3-.45-.33-.34-.34-.25-.34-.16-.33-.1-.3-.04-.25-.02-.2.01-.13v-5.34l.05-.64.13-.54.21-.46.26-.38.3-.32.33-.24.35-.2.35-.14.33-.1.3-.06.26-.04.21-.02.13-.01h5.84l.69-.05.59-.14.5-.21.41-.28.33-.32.27-.35.2-.36.15-.36.1-.35.07-.32.04-.28.02-.21V6.07h2.09l.14.01zm-6.47 14.25l-.23.33-.08.41.08.41.23.33.33.23.41.08.41-.08.33-.23.23-.33.08-.41-.08-.41-.23-.33-.33-.23-.41-.08-.41.08z"/></svg></span><span class="lbl" style="left:48.3px;color:#cca700;letter-spacing:-0.185px">base<span style="display:inline-block;width:8.09px;letter-spacing:0;margin-right:-0.185px;transform:scaleX(0.745);transform-origin:0 0">_</span>mcp<span style="display:inline-block;width:8.09px;letter-spacing:0;margin-right:-0.185px;transform:scaleX(0.745);transform-origin:0 0">_</span>client.py</span><span class="lbl" style="left:220.6px;color:#ad8d08;font-size:18.5px;letter-spacing:-0.571px">3, M</span></div>
<div class="tab" style="left:976px;width:180px"><span class="ico" style="left:21.2px"><svg class="py" viewBox="0 0 24 24"><path fill="#54a0c6" d="M14.25.18l.9.2.73.26.59.3.45.32.34.34.25.34.16.33.1.3.04.26.02.2-.01.13V8.5l-.05.63-.13.55-.21.46-.26.38-.3.31-.33.25-.35.19-.35.14-.33.1-.3.07-.26.04-.21.02H8.77l-.69.05-.59.14-.5.22-.41.27-.33.32-.27.35-.2.36-.15.37-.1.35-.07.32-.04.27-.02.21v3.06H3.17l-.21-.03-.28-.07-.32-.12-.35-.18-.36-.26-.36-.36-.35-.46-.32-.59-.28-.73-.21-.88-.14-1.05-.05-1.23.06-1.22.16-1.04.24-.87.32-.71.36-.57.4-.44.42-.33.42-.24.4-.16.36-.1.32-.05.24-.01h.16l.06.01h8.16v-.83H6.18l-.01-2.75-.02-.37.05-.34.11-.31.17-.28.25-.26.31-.23.38-.2.44-.18.51-.15.58-.12.64-.1.71-.06.77-.04.84-.02 1.27.05zm-6.3 1.98l-.23.33-.08.41.08.41.23.34.33.22.41.09.41-.09.33-.22.23-.34.08-.41-.08-.41-.23-.33-.33-.22-.41-.09-.41.09zm13.09 3.95l.28.06.32.12.35.18.36.27.36.35.35.47.32.59.28.73.21.88.14 1.04.05 1.23-.06 1.23-.16 1.04-.24.86-.32.71-.36.57-.4.45-.42.33-.42.24-.4.16-.36.09-.32.05-.24.02-.16-.01h-8.22v.82h5.84l.01 2.76.02.36-.05.34-.11.31-.17.29-.25.25-.31.24-.38.2-.44.17-.51.15-.58.13-.64.09-.71.07-.77.04-.84.01-1.27-.04-1.07-.14-.9-.2-.73-.25-.59-.3-.45-.33-.34-.34-.25-.34-.16-.33-.1-.3-.04-.25-.02-.2.01-.13v-5.34l.05-.64.13-.54.21-.46.26-.38.3-.32.33-.24.35-.2.35-.14.33-.1.3-.06.26-.04.21-.02.13-.01h5.84l.69-.05.59-.14.5-.21.41-.28.33-.32.27-.35.2-.36.15-.36.1-.35.07-.32.04-.28.02-.21V6.07h2.09l.14.01zm-6.47 14.25l-.23.33-.08.41.08.41.23.33.33.23.41.08.41-.08.33-.23.23-.33.08-.41-.08-.41-.23-.33-.33-.23-.41-.08-.41.08z"/></svg></span><span class="lbl" style="left:48.5px;color:#9d9d9d;letter-spacing:0.015px">config.py</span></div>
<!-- editor actions -->
<svg class="abs" style="left:1184px;top:8px" width="20" height="22" viewBox="0 0 20 22"><path d="M3 2.500 17 11 3 19.500z" fill="none" stroke="#d0d0d0" stroke-width="1.6" stroke-linejoin="round"/></svg>
<svg class="abs" style="left:1211px;top:12px" width="14" height="12" viewBox="0 0 14 12"><path d="M1.500 3.500 7 9 12.500 3.500" fill="none" stroke="#d0d0d0" stroke-width="1.400"/></svg>
<svg class="abs" style="left:1241.3px;top:5.700px" width="24.3" height="24.3" viewBox="0 0 24 24"><path fill="#ffffff" d="M22.2819 9.8211a5.9847 5.9847 0 0 0-.5157-4.9108 6.0462 6.0462 0 0 0-6.5098-2.9A6.0651 6.0651 0 0 0 4.9807 4.1818a5.9847 5.9847 0 0 0-3.9977 2.9 6.0462 6.0462 0 0 0 .7427 7.0966 5.98 5.98 0 0 0 .511 4.9107 6.051 6.051 0 0 0 6.5146 2.9001A5.9847 5.9847 0 0 0 13.2599 24a6.0557 6.0557 0 0 0 5.7718-4.2058 5.9894 5.9894 0 0 0 3.9977-2.9001 6.0557 6.0557 0 0 0-.7475-7.0729zm-9.022 12.6081a4.4755 4.4755 0 0 1-2.8764-1.0408l.1419-.0804 4.7783-2.7582a.7948.7948 0 0 0 .3927-.6813v-6.7369l2.02 1.1686a.071.071 0 0 1 .038.052v5.5826a4.504 4.504 0 0 1-4.4945 4.4944zm-9.6607-4.1254a4.4708 4.4708 0 0 1-.5346-3.0137l.142.0852 4.783 2.7582a.7712.7712 0 0 0 .7806 0l5.8428-3.3685v2.3324a.0804.0804 0 0 1-.0332.0615L9.74 19.9502a4.4992 4.4992 0 0 1-6.1408-1.6464zM2.3408 7.8956a4.485 4.485 0 0 1 2.3655-1.9728V11.6a.7664.7664 0 0 0 .3879.6765l5.8144 3.3543-2.0201 1.1685a.0757.0757 0 0 1-.071 0l-4.8303-2.7865A4.504 4.504 0 0 1 2.3408 7.872zm16.5963 3.8558L13.1038 8.364 15.1192 7.2a.0757.0757 0 0 1 .071 0l4.8303 2.7913a4.4944 4.4944 0 0 1-.6765 8.1042v-5.6772a.79.79 0 0 0-.407-.667zm2.0107-3.0231l-.142-.0852-4.7735-2.7818a.7759.7759 0 0 0-.7854 0L9.409 9.2297V6.8974a.0662.0662 0 0 1 .0284-.0615l4.8303-2.7866a4.4992 4.4992 0 0 1 6.6802 4.66zM8.3065 12.863l-2.02-1.1638a.0804.0804 0 0 1-.038-.0567V6.0742a4.4992 4.4992 0 0 1 7.3757-3.4537l-.142.0805L8.704 5.459a.7948.7948 0 0 0-.3927.6813zm1.0976-2.3654l2.602-1.4998 2.6069 1.4998v2.9994l-2.5974 1.4997-2.6067-1.4997Z"/></svg>
<svg class="abs" style="left:1282px;top:8px" width="22" height="22" viewBox="0 0 22 22"><rect x="1.500" y="1.800" width="19" height="18.400" rx="1.500" fill="none" stroke="#d0d0d0" stroke-width="1.600"/><path d="M11 2v18" stroke="#d0d0d0" stroke-width="1.600"/></svg>
<svg class="abs" style="left:1321px;top:15px" width="22" height="6" viewBox="0 0 22 6"><circle cx="3" cy="3" r="1.700" fill="#d0d0d0"/><circle cx="11" cy="3" r="1.700" fill="#d0d0d0"/><circle cx="19" cy="3" r="1.700" fill="#d0d0d0"/></svg>

</div>
  <div id="bc">
<span style="left:24.7px;letter-spacing:0.027px">oxygent</span>
<span style="left:117.7px;letter-spacing:-0.220px">oxy</span>
<span style="left:172.3px;letter-spacing:0.066px">mcp<span style="display:inline-block;width:8.09px;letter-spacing:0;margin-right:0.066px;transform:scaleX(0.745);transform-origin:0 0">_</span>tools</span>
<span style="left:316.4px;letter-spacing:0.088px">stdio<span style="display:inline-block;width:8.09px;letter-spacing:0;margin-right:0.088px;transform:scaleX(0.745);transform-origin:0 0">_</span>mcp<span style="display:inline-block;width:8.09px;letter-spacing:0;margin-right:0.088px;transform:scaleX(0.745);transform-origin:0 0">_</span>client.py</span>
<span style="left:536.4px;letter-spacing:-0.303px">StdioMCPClient</span>
<span style="left:723.0px;letter-spacing:0.113px">call<span style="display:inline-block;width:8.09px;letter-spacing:0;margin-right:0.113px;transform:scaleX(0.745);transform-origin:0 0">_</span>tool</span>
<i class="abs" style="left:289.5px;top:9.2px;width:16.6px;height:16.6px"><svg class="py" viewBox="0 0 24 24"><path fill="#54a0c6" d="M14.25.18l.9.2.73.26.59.3.45.32.34.34.25.34.16.33.1.3.04.26.02.2-.01.13V8.5l-.05.63-.13.55-.21.46-.26.38-.3.31-.33.25-.35.19-.35.14-.33.1-.3.07-.26.04-.21.02H8.77l-.69.05-.59.14-.5.22-.41.27-.33.32-.27.35-.2.36-.15.37-.1.35-.07.32-.04.27-.02.21v3.06H3.17l-.21-.03-.28-.07-.32-.12-.35-.18-.36-.26-.36-.36-.35-.46-.32-.59-.28-.73-.21-.88-.14-1.05-.05-1.23.06-1.22.16-1.04.24-.87.32-.71.36-.57.4-.44.42-.33.42-.24.4-.16.36-.1.32-.05.24-.01h.16l.06.01h8.16v-.83H6.18l-.01-2.75-.02-.37.05-.34.11-.31.17-.28.25-.26.31-.23.38-.2.44-.18.51-.15.58-.12.64-.1.71-.06.77-.04.84-.02 1.27.05zm-6.3 1.98l-.23.33-.08.41.08.41.23.34.33.22.41.09.41-.09.33-.22.23-.34.08-.41-.08-.41-.23-.33-.33-.22-.41-.09-.41.09zm13.09 3.95l.28.06.32.12.35.18.36.27.36.35.35.47.32.59.28.73.21.88.14 1.04.05 1.23-.06 1.23-.16 1.04-.24.86-.32.71-.36.57-.4.45-.42.33-.42.24-.4.16-.36.09-.32.05-.24.02-.16-.01h-8.22v.82h5.84l.01 2.76.02.36-.05.34-.11.31-.17.29-.25.25-.31.24-.38.2-.44.17-.51.15-.58.13-.64.09-.71.07-.77.04-.84.01-1.27-.04-1.07-.14-.9-.2-.73-.25-.59-.3-.45-.33-.34-.34-.25-.34-.16-.33-.1-.3-.04-.25-.02-.2.01-.13v-5.34l.05-.64.13-.54.21-.46.26-.38.3-.32.33-.24.35-.2.35-.14.33-.1.3-.06.26-.04.21-.02.13-.01h5.84l.69-.05.59-.14.5-.21.41-.28.33-.32.27-.35.2-.36.15-.36.1-.35.07-.32.04-.28.02-.21V6.07h2.09l.14.01zm-6.47 14.25l-.23.33-.08.41.08.41.23.33.33.23.41.08.41-.08.33-.23.23-.33.08-.41-.08-.41-.23-.33-.33-.23-.41-.08-.41.08z"/></svg></i>
<svg class="abs" style="left:0;top:0" width="1366" height="33" viewBox="381 44 1366 33"><g fill="none" stroke-width="1.5"><path d="M483.7 53.7l8.4 7.3-8.4 7.4" stroke="#a9a9a9"/><path d="M537 53.7l8.4 7.3-8.4 7.4" stroke="#a9a9a9"/><path d="M649 53.7l8.4 7.3-8.4 7.4" stroke="#a9a9a9"/><path d="M873.1 53.7l8.4 7.3-8.4 7.4" stroke="#a9a9a9"/><path d="M1059.3 53.7l8.4 7.3-8.4 7.4" stroke="#a9a9a9"/><g stroke="#ee9d28" stroke-linejoin="round" stroke-width="1.6" transform="translate(888 46)"><path d="M8.9 3.2 12.9 6.6 5.9 13.8 2.1 10z"/><path d="M8.2 12.5H17.7M8.6 12.5V20.2H17.2"/><path d="M20.6 9.3 23.100 11.600 19 15.900 16.500 13.600z"/><path d="M20.600 17.400 23.100 19.700 18.800 24 16.500 21.700z"/></g><g stroke="#b180d7" stroke-linejoin="round" stroke-width="1.6"><path d="M1087.100 49.700 1095.500 54.900V64.600L1087.100 69.600 1078.500 64.600V54.900z"/><path d="M1078.500 54.900 1087.100 59.400 1095.500 54.900M1087.100 59.400V69.600"/></g></g></svg>

</div>
  <div id="code">
<div id="curline" style="left:489px"></div>
<div class="gd" style="left:487.10px;top:103.34999999999984px;height:894.9000000000002px;background:#404040"></div>
<div class="gd" style="left:537.50px;top:103.34999999999984px;height:11.400000000000162px;background:#404040"></div>
<div class="gd" style="left:537.50px;top:171.75px;height:142.5px;background:#8c8c8c"></div>
<div class="gd" style="left:537.50px;top:371.25px;height:627.0px;background:#404040"></div>
<div class="gd" style="left:587.90px;top:103.34999999999984px;height:11.400000000000162px;background:#404040"></div>
<div class="gd" style="left:587.90px;top:228.75px;height:85.5px;background:#404040"></div>
<div class="gd" style="left:587.90px;top:399.75px;height:85.5px;background:#404040"></div>
<div class="gd" style="left:587.90px;top:542.25px;height:28.5px;background:#404040"></div>
<div class="gd" style="left:587.90px;top:684.75px;height:85.5px;background:#404040"></div>
<div class="gd" style="left:587.90px;top:798.75px;height:142.5px;background:#404040"></div>
<div class="gd" style="left:638.30px;top:257.25px;height:57.0px;background:#404040"></div>
<div class="gd" style="left:638.30px;top:741.75px;height:28.5px;background:#404040"></div>

<div class="ln" style="top:86.25px">86</div>
<div class="cl" style="top:86.25px">            <span style="color:#c586c0">raise</span> <span style="color:#4ec9b0">Exception</span><span style="color:#ffd700">(</span><span style="color:#569cd6">f</span><span style="color:#ce9178">"Error: </span><span style="color:#da70d6">{</span><span style="color:#9cdcfe">e</span><span style="color:#da70d6">}</span><span style="color:#ce9178">"</span><span style="color:#ffd700">)</span></div>
<div class="ln" style="top:114.75px">87</div>
<div class="ln" style="top:143.25px">88</div>
<div class="cl" style="top:143.25px">    <span style="color:#569cd6">async</span> <span style="color:#569cd6">def</span> <span style="color:#dcdcaa">call<i>_</i>tool</span><span style="color:#ffd700">(</span><span style="color:#9cdcfe">self</span>, <span style="color:#9cdcfe">tool<i>_</i>name</span>, <span style="color:#9cdcfe">arguments</span>, <span style="color:#9cdcfe">headers</span>=<span style="color:#569cd6">None</span><span style="color:#ffd700">)</span>:</div>
<div class="ln act" style="top:171.75px">89</div>
<div class="cl" style="top:171.75px">        <span style="color:#9cdcfe">server<i>_</i></span><span class="hm" style="color:#9cdcfe">params</span> = <span style="color:#c586c0">await</span> <span style="color:#9cdcfe">self</span>.<span class="hw" style="color:#dcdcaa">get<i>_</i>server<i>_</i></span><span class="hmw" style="color:#dcdcaa">params</span><span style="color:#ffd700">()</span></div>
<div class="ln" style="top:200.25px">90</div>
<div class="cl" style="top:200.25px">        <span style="color:#c586c0">async</span> <span style="color:#c586c0">with</span> stdio<i>_</i>client<span style="color:#ffd700">(</span><span style="color:#9cdcfe">server<i>_</i></span><span class="hm" style="color:#9cdcfe">params</span><span style="color:#ffd700">)</span> <span style="color:#c586c0">as</span> <span style="color:#9cdcfe">streams</span>:</div>
<div class="ln" style="top:228.75px">91</div>
<div class="cl" style="top:228.75px">            <span style="color:#c586c0">async</span> <span style="color:#c586c0">with</span> ClientSession<span style="color:#ffd700">(</span><b>*</b><span style="color:#9cdcfe">streams</span><span style="color:#ffd700">)</span> <span style="color:#c586c0">as</span> <span style="color:#9cdcfe">session</span>:</div>
<div class="ln" style="top:257.25px">92</div>
<div class="cl" style="top:257.25px">                <span style="color:#c586c0">await</span> <span style="color:#9cdcfe">session</span>.<span style="color:#dcdcaa">initialize</span><span style="color:#ffd700">()</span></div>
<div class="ln" style="top:285.75px">93</div>
<div class="cl" style="top:285.75px">                <span style="color:#c586c0">return</span> <span style="color:#c586c0">await</span> <span style="color:#9cdcfe">session</span>.<span style="color:#dcdcaa">call<i>_</i>tool</span><span style="color:#ffd700">(</span><span style="color:#9cdcfe">tool<i>_</i>name</span>, <span style="color:#9cdcfe">arguments</span><span style="color:#ffd700">)</span></div>
<div class="ln" style="top:314.25px">94</div>
<div class="ln" style="top:342.75px">95</div>
<div class="cl" style="top:342.75px">    <span style="color:#569cd6">async</span> <span style="color:#569cd6">def</span> <span class="hw" style="color:#dcdcaa">get<i>_</i>server<i>_</i></span><span class="hmw2" style="color:#dcdcaa">params</span><span style="color:#ffd700">(</span><span style="color:#9cdcfe">self</span><span style="color:#ffd700">)</span>:</div>
<div class="ln" style="top:371.25px">96</div>
<div class="cl" style="top:371.25px">        <span style="color:#9cdcfe">command</span> = <span style="color:#ffd700">(</span></div>
<div class="ln" style="top:399.75px">97</div>
<div class="cl" style="top:399.75px">            <span style="color:#4ec9b0">shutil</span>.<span style="color:#dcdcaa">which</span><span style="color:#da70d6">(</span><span style="color:#ce9178">"npx"</span><span style="color:#da70d6">)</span></div>
<div class="ln" style="top:428.25px">98</div>
<div class="cl" style="top:428.25px">            <span style="color:#c586c0">if</span> <span style="color:#9cdcfe">self</span>.<span class="hm" style="color:#9cdcfe">params</span><span style="color:#da70d6">[</span><span style="color:#ce9178">"command"</span><span style="color:#da70d6">]</span> == <span style="color:#ce9178">"npx"</span></div>
<div class="ln" style="top:456.75px">99</div>
<div class="cl" style="top:456.75px">            <span style="color:#c586c0">else</span> <span style="color:#9cdcfe">self</span>.<span class="hm" style="color:#9cdcfe">params</span><span style="color:#da70d6">[</span><span style="color:#ce9178">"command"</span><span style="color:#da70d6">]</span></div>
<div class="ln" style="top:485.25px">100</div>
<div class="cl" style="top:485.25px">        <span style="color:#ffd700">)</span></div>
<div class="ln" style="top:513.75px">101</div>
<div class="cl" style="top:513.75px">        <span style="color:#c586c0">if</span> <span style="color:#9cdcfe">command</span> <span style="color:#569cd6">is</span> <span style="color:#569cd6">None</span>:</div>
<div class="ln" style="top:542.25px">102</div>
<div class="cl" style="top:542.25px">            <span style="color:#c586c0">raise</span> <span style="color:#4ec9b0">ValueError</span><span style="color:#ffd700">(</span><span style="color:#ce9178">"The command must be a valid string and cannot be None."</span><span style="color:#ffd700">)</span></div>
<div class="ln" style="top:570.75px">103</div>
<div class="ln" style="top:599.25px">104</div>
<div class="cl" style="top:599.25px">        <span style="color:#9cdcfe">args</span> = <span style="color:#9cdcfe">self</span>.<span class="hm" style="color:#9cdcfe">params</span><span style="color:#ffd700">[</span><span style="color:#ce9178">"args"</span><span style="color:#ffd700">]</span></div>
<div class="ln" style="top:627.75px">105</div>
<div class="cl" style="top:627.75px">        <span style="color:#c586c0">await</span> <span style="color:#9cdcfe">self</span>.<span style="color:#dcdcaa"><i>_</i>ensure<i>_</i>directories<i>_</i>exist</span><span style="color:#ffd700">(</span><span style="color:#9cdcfe">args</span><span style="color:#ffd700">)</span></div>
<div class="ln" style="top:656.25px">106</div>
<div class="cl" style="top:656.25px">        <span style="color:#c586c0">if</span> <span style="color:#9cdcfe">args</span><span style="color:#ffd700">[</span><span style="color:#b5cea8">0</span><span style="color:#ffd700">]</span> == <span style="color:#ce9178">"--directory"</span> <span style="color:#569cd6">and</span> <span style="color:#9cdcfe">args</span><span style="color:#ffd700">[</span><span style="color:#b5cea8">2</span><span style="color:#ffd700">]</span> == <span style="color:#ce9178">"run"</span>:</div>
<div class="ln" style="top:684.75px">107</div>
<div class="cl" style="top:684.75px">            <span style="color:#9cdcfe">mcp<i>_</i>tool<i>_</i>file</span> = <span style="color:#4ec9b0">os</span>.<span style="color:#9cdcfe">path</span>.<span style="color:#dcdcaa">join</span><span style="color:#ffd700">(</span><span style="color:#9cdcfe">args</span><span style="color:#da70d6">[</span><span style="color:#b5cea8">1</span><span style="color:#da70d6">]</span>, <span style="color:#9cdcfe">args</span><span style="color:#da70d6">[</span><span style="color:#b5cea8">3</span><span style="color:#da70d6">]</span><span style="color:#ffd700">)</span></div>
<div class="ln" style="top:713.25px">108</div>
<div class="cl" style="top:713.25px">            <span style="color:#c586c0">if</span> <span style="color:#569cd6">not</span> <span style="color:#4ec9b0">os</span>.<span style="color:#9cdcfe">path</span>.<span style="color:#dcdcaa">exists</span><span style="color:#ffd700">(</span><span style="color:#9cdcfe">mcp<i>_</i>tool<i>_</i>file</span><span style="color:#ffd700">)</span>:</div>
<div class="ln" style="top:741.75px">109</div>
<div class="cl" style="top:741.75px">                <span style="color:#c586c0">raise</span> <span style="color:#4ec9b0">FileNotFoundError</span><span style="color:#ffd700">(</span><span style="color:#569cd6">f</span><span style="color:#ce9178">"</span><span style="color:#da70d6">{</span><span style="color:#9cdcfe">mcp<i>_</i>tool<i>_</i>file</span><span style="color:#da70d6">}</span><span style="color:#ce9178"> does not exist."</span><span style="color:#ffd700">)</span></div>
<div class="ln" style="top:770.25px">110</div>
<div class="cl" style="top:770.25px">        <span style="color:#9cdcfe">server<i>_</i></span><span class="hm" style="color:#9cdcfe">params</span> = StdioServerParameters<span style="color:#ffd700">(</span></div>
<div class="ln" style="top:798.75px">111</div>
<div class="cl" style="top:798.75px">            <span style="color:#9cdcfe">command</span>=<span style="color:#9cdcfe">command</span>,</div>
<div class="ln" style="top:827.25px">112</div>
<div class="cl" style="top:827.25px">            <span style="color:#9cdcfe">args</span>=<span style="color:#9cdcfe">args</span>,</div>
<div class="ln" style="top:855.75px">113</div>
<div class="cl" style="top:855.75px">            <span style="color:#9cdcfe">env</span>=<span style="color:#da70d6">{</span><b>*</b><b>*</b><span style="color:#4ec9b0">os</span>.<span style="color:#9cdcfe">environ</span>, <b>*</b><b>*</b><span style="color:#9cdcfe">self</span>.<span class="hm" style="color:#9cdcfe">params</span><span style="color:#179fff">[</span><span style="color:#ce9178">"env"</span><span style="color:#179fff">]</span><span style="color:#da70d6">}</span></div>
<div class="ln" style="top:884.25px">114</div>
<div class="cl" style="top:884.25px">            <span style="color:#c586c0">if</span> <span style="color:#9cdcfe">self</span>.<span class="hm" style="color:#9cdcfe">params</span>.<span style="color:#dcdcaa">get</span><span style="color:#da70d6">(</span><span style="color:#ce9178">"env"</span><span style="color:#da70d6">)</span></div>
<div class="ln" style="top:912.75px">115</div>
<div class="cl" style="top:912.75px">            <span style="color:#c586c0">else</span> <span style="color:#da70d6">{</span><b>*</b><b>*</b><span style="color:#4ec9b0">os</span>.<span style="color:#9cdcfe">environ</span><span style="color:#da70d6">}</span>,</div>
<div class="ln" style="top:941.25px">116</div>
<div class="cl" style="top:941.25px">        <span style="color:#ffd700">)</span></div>
<div class="ln" style="top:969.75px">117</div>
<div class="cl" style="top:969.75px">        <span style="color:#c586c0">return</span> <span style="color:#9cdcfe">server<i>_</i></span><span class="hm" style="color:#9cdcfe">params</span></div>
<div class="ln" style="top:998.25px">118</div>
<svg class="abs" style="left:462px;top:152.25px" width="18" height="12" viewBox="0 0 18 12"><path d="M1.500 2 9 9.500 16.500 2" fill="none" stroke="#2c2c2c" stroke-width="1.400"/></svg>
<svg class="abs" style="left:462px;top:209.25px" width="18" height="12" viewBox="0 0 18 12"><path d="M1.500 2 9 9.500 16.500 2" fill="none" stroke="#2c2c2c" stroke-width="1.400"/></svg>
<svg class="abs" style="left:462px;top:351.75px" width="18" height="12" viewBox="0 0 18 12"><path d="M1.500 2 9 9.500 16.500 2" fill="none" stroke="#2c2c2c" stroke-width="1.400"/></svg>
<svg class="abs" style="left:462px;top:522.75px" width="18" height="12" viewBox="0 0 18 12"><path d="M1.500 2 9 9.500 16.500 2" fill="none" stroke="#2c2c2c" stroke-width="1.400"/></svg>
<svg class="abs" style="left:462px;top:665.25px" width="18" height="12" viewBox="0 0 18 12"><path d="M1.500 2 9 9.500 16.500 2" fill="none" stroke="#2c2c2c" stroke-width="1.400"/></svg>
<svg class="abs" style="left:462px;top:722.25px" width="18" height="12" viewBox="0 0 18 12"><path d="M1.500 2 9 9.500 16.500 2" fill="none" stroke="#2c2c2c" stroke-width="1.400"/></svg>
<svg class="abs" style="left:462px;top:779.25px" width="18" height="12" viewBox="0 0 18 12"><path d="M1.500 2 9 9.500 16.500 2" fill="none" stroke="#2c2c2c" stroke-width="1.400"/></svg>
<div class="abs" style="left:1027.5px;top:171.75px;width:2px;height:28.5px;background:#aeafad"></div>
  </div>
  <div id="sticky"><div class="ln" style="top:0">23</div><div class="cl" style="top:0"><span style="color:#569cd6">class</span> <span style="color:#4ec9b0">StdioMCPClient</span><span style="color:#ffd700">(</span><span style="color:#4ec9b0">BaseMCPClient</span><span style="color:#ffd700">)</span>:</div></div>
  <svg class="abs" style="left:1251px;top:77px" width="95" height="240" viewBox="0 0 95 240">
<rect x="0" y="26" width="95" height="6" fill="#74600f"/>
<rect x="0" y="59.7" width="95" height="2" fill="#93590f"/>
<rect x="0" y="65.7" width="95" height="2" fill="#93590f"/>
<rect x="0" y="131.7" width="95" height="2" fill="#93590f"/>
<rect x="0" y="135.7" width="95" height="2" fill="#93590f"/>
<rect x="0" y="177.7" width="95" height="2" fill="#93590f"/>
<rect x="0" y="187.7" width="95" height="2" fill="#93590f"/>
<rect x="0" y="193.7" width="95" height="2" fill="#93590f"/>
<rect x="0" y="195.7" width="95" height="2" fill="#93590f"/>
<rect x="0" y="205.7" width="95" height="2" fill="#93590f"/>
<rect x="0" y="217.7" width="95" height="2" fill="#93590f"/>
<rect x="0" y="223.7" width="95" height="2" fill="#93590f"/>
<rect x="0" y="225.7" width="95" height="2" fill="#93590f"/>
<rect x="0" y="231.7" width="95" height="2" fill="#93590f"/>
<rect x="0.0" y="0.0" width="42.2" height="1.200" fill="#ce9178" opacity=".55"/>
<rect x="0.0" y="4.0" width="87.5" height="1.200" fill="#ce9178" opacity=".55"/>
<rect x="0.0" y="6.0" width="82.4" height="1.200" fill="#ce9178" opacity=".55"/>
<rect x="0.0" y="8.0" width="83.4" height="1.200" fill="#ce9178" opacity=".55"/>
<rect x="0.0" y="10.0" width="27.8" height="1.200" fill="#ce9178" opacity=".55"/>
<rect x="0.0" y="12.0" width="3.1" height="1.200" fill="#ce9178" opacity=".55"/>
<rect x="0.0" y="16.0" width="6.2" height="1.200" fill="#c586c0" opacity=".55"/>
<rect x="7.2" y="16.0" width="7.2" height="1.200" fill="#4ec9b0" opacity=".55"/>
<rect x="0.0" y="18.0" width="6.2" height="1.200" fill="#c586c0" opacity=".55"/>
<rect x="7.2" y="18.0" width="2.1" height="1.200" fill="#4ec9b0" opacity=".55"/>
<rect x="0.0" y="20.0" width="6.2" height="1.200" fill="#c586c0" opacity=".55"/>
<rect x="7.2" y="20.0" width="6.2" height="1.200" fill="#4ec9b0" opacity=".55"/>
<rect x="0.0" y="22.0" width="4.1" height="1.200" fill="#c586c0" opacity=".55"/>
<rect x="5.2" y="22.0" width="6.2" height="1.200" fill="#4ec9b0" opacity=".55"/>
<rect x="12.4" y="22.0" width="6.2" height="1.200" fill="#c586c0" opacity=".55"/>
<rect x="19.6" y="22.0" width="3.1" height="1.200" fill="#4ec9b0" opacity=".55"/>
<rect x="0.0" y="26.0" width="4.1" height="1.200" fill="#c8b45a" opacity=".55"/>
<rect x="5.2" y="25.8" width="3.1" height="2" fill="#cfa900"/>
<rect x="9.3" y="26.0" width="6.2" height="1.200" fill="#c8b45a" opacity=".55"/>
<rect x="16.5" y="26.0" width="30.9" height="1.200" fill="#c8b45a" opacity=".55"/>
<rect x="0.0" y="28.0" width="4.1" height="1.200" fill="#c8b45a" opacity=".55"/>
<rect x="5.2" y="27.8" width="16.5" height="2" fill="#cfa900"/>
<rect x="22.7" y="28.0" width="6.2" height="1.200" fill="#c8b45a" opacity=".55"/>
<rect x="29.9" y="28.0" width="12.4" height="1.200" fill="#c8b45a" opacity=".55"/>
<rect x="0.0" y="30.0" width="4.1" height="1.200" fill="#c8b45a" opacity=".55"/>
<rect x="5.2" y="29.8" width="9.3" height="2" fill="#cfa900"/>
<rect x="14.4" y="30.0" width="6.2" height="1.200" fill="#c8b45a" opacity=".55"/>
<rect x="21.6" y="30.0" width="5.2" height="1.200" fill="#c8b45a" opacity=".55"/>
<rect x="0.0" y="34.0" width="4.1" height="1.200" fill="#c586c0" opacity=".55"/>
<rect x="5.2" y="34.0" width="16.5" height="1.200" fill="#4ec9b0" opacity=".55"/>
<rect x="22.7" y="34.0" width="6.2" height="1.200" fill="#c586c0" opacity=".55"/>
<rect x="29.9" y="34.0" width="13.4" height="1.200" fill="#4ec9b0" opacity=".55"/>
<rect x="0.0" y="38.0" width="6.2" height="1.200" fill="#9cdcfe" opacity=".55"/>
<rect x="7.2" y="38.0" width="1.0" height="1.200" fill="#d4d4d4" opacity=".55"/>
<rect x="9.3" y="38.0" width="7.2" height="1.200" fill="#4ec9b0" opacity=".55"/>
<rect x="16.5" y="38.0" width="10.3" height="1.200" fill="#dcdcaa" opacity=".55"/>
<rect x="26.8" y="38.0" width="10.3" height="1.200" fill="#9cdcfe" opacity=".55"/>
<rect x="0.0" y="44.0" width="5.2" height="1.200" fill="#569cd6" opacity=".55"/>
<rect x="6.2" y="44.0" width="14.4" height="1.200" fill="#4ec9b0" opacity=".55"/>
<rect x="20.6" y="44.0" width="15.5" height="1.200" fill="#4ec9b0" opacity=".55"/>
<rect x="4.1" y="46.0" width="59.7" height="1.200" fill="#ce9178" opacity=".55"/>
<rect x="4.1" y="50.0" width="74.2" height="1.200" fill="#ce9178" opacity=".55"/>
<rect x="4.1" y="52.0" width="75.2" height="1.200" fill="#ce9178" opacity=".55"/>
<rect x="4.1" y="54.0" width="70.0" height="1.200" fill="#ce9178" opacity=".55"/>
<rect x="4.1" y="58.0" width="11.3" height="1.200" fill="#ce9178" opacity=".55"/>
<rect x="8.2" y="59.8" width="6.2" height="1.600" fill="#e8940f"/>
<rect x="14.4" y="60.0" width="80.6" height="1.200" fill="#ce9178" opacity=".55"/>
<rect x="4.1" y="62.0" width="3.1" height="1.200" fill="#ce9178" opacity=".55"/>
<rect x="4.1" y="65.8" width="6.2" height="1.600" fill="#e8940f"/>
<rect x="11.3" y="66.0" width="46.4" height="1.200" fill="#ce9178" opacity=".55"/>
<rect x="4.1" y="70.0" width="5.2" height="1.200" fill="#569cd6" opacity=".55"/>
<rect x="10.3" y="70.0" width="3.1" height="1.200" fill="#569cd6" opacity=".55"/>
<rect x="14.4" y="70.0" width="30.9" height="1.200" fill="#dcdcaa" opacity=".55"/>
<rect x="46.4" y="70.0" width="4.1" height="1.200" fill="#9cdcfe" opacity=".55"/>
<rect x="51.5" y="70.0" width="8.2" height="1.200" fill="#4ec9b0" opacity=".55"/>
<rect x="61.8" y="70.0" width="4.1" height="1.200" fill="#569cd6" opacity=".55"/>
<rect x="8.2" y="72.0" width="68.0" height="1.200" fill="#ce9178" opacity=".55"/>
<rect x="8.2" y="74.0" width="2.1" height="1.200" fill="#c586c0" opacity=".55"/>
<rect x="11.3" y="74.0" width="8.2" height="1.200" fill="#9cdcfe" opacity=".55"/>
<rect x="20.6" y="74.0" width="2.1" height="1.200" fill="#d4d4d4" opacity=".55"/>
<rect x="23.7" y="74.0" width="5.2" height="1.200" fill="#569cd6" opacity=".55"/>
<rect x="29.9" y="74.0" width="18.5" height="1.200" fill="#ce9178" opacity=".55"/>
<rect x="49.4" y="74.0" width="2.1" height="1.200" fill="#569cd6" opacity=".55"/>
<rect x="53.6" y="74.0" width="10.3" height="1.200" fill="#9cdcfe" opacity=".55"/>
<rect x="12.4" y="76.0" width="10.3" height="1.200" fill="#9cdcfe" opacity=".55"/>
<rect x="23.7" y="76.0" width="1.0" height="1.200" fill="#d4d4d4" opacity=".55"/>
<rect x="25.8" y="76.0" width="6.2" height="1.200" fill="#9cdcfe" opacity=".55"/>
<rect x="12.4" y="78.0" width="2.1" height="1.200" fill="#c586c0" opacity=".55"/>
<rect x="15.5" y="78.0" width="3.1" height="1.200" fill="#569cd6" opacity=".55"/>
<rect x="19.6" y="78.0" width="2.1" height="1.200" fill="#4ec9b0" opacity=".55"/>
<rect x="22.7" y="78.0" width="22.7" height="1.200" fill="#9cdcfe" opacity=".55"/>
<rect x="16.5" y="80.0" width="3.1" height="1.200" fill="#c586c0" opacity=".55"/>
<rect x="20.6" y="82.0" width="2.1" height="1.200" fill="#4ec9b0" opacity=".55"/>
<rect x="23.7" y="82.0" width="18.5" height="1.200" fill="#dcdcaa" opacity=".55"/>
<rect x="43.3" y="82.0" width="14.4" height="1.200" fill="#9cdcfe" opacity=".55"/>
<rect x="20.6" y="84.0" width="6.2" height="1.200" fill="#9cdcfe" opacity=".55"/>
<rect x="27.8" y="84.0" width="4.1" height="1.200" fill="#dcdcaa" opacity=".55"/>
<rect x="33.0" y="84.0" width="20.6" height="1.200" fill="#ce9178" opacity=".55"/>
<rect x="54.6" y="84.0" width="14.4" height="1.200" fill="#9cdcfe" opacity=".55"/>
<rect x="16.5" y="86.0" width="6.2" height="1.200" fill="#c586c0" opacity=".55"/>
<rect x="23.7" y="86.0" width="9.3" height="1.200" fill="#4ec9b0" opacity=".55"/>
<rect x="34.0" y="86.0" width="2.1" height="1.200" fill="#c586c0" opacity=".55"/>
<rect x="37.1" y="86.0" width="1.0" height="1.200" fill="#9cdcfe" opacity=".55"/>
<rect x="20.6" y="88.0" width="6.2" height="1.200" fill="#9cdcfe" opacity=".55"/>
<rect x="27.8" y="88.0" width="7.2" height="1.200" fill="#dcdcaa" opacity=".55"/>
<rect x="36.1" y="88.0" width="30.9" height="1.200" fill="#ce9178" opacity=".55"/>
<rect x="68.0" y="88.0" width="12.4" height="1.200" fill="#9cdcfe" opacity=".55"/>
<rect x="81.4" y="88.0" width="4.1" height="1.200" fill="#9cdcfe" opacity=".55"/>
<rect x="8.2" y="92.0" width="2.1" height="1.200" fill="#c586c0" opacity=".55"/>
<rect x="11.3" y="92.0" width="7.2" height="1.200" fill="#9cdcfe" opacity=".55"/>
<rect x="19.6" y="92.0" width="2.1" height="1.200" fill="#d4d4d4" opacity=".55"/>
<rect x="22.7" y="92.0" width="13.4" height="1.200" fill="#ce9178" opacity=".55"/>
<rect x="37.1" y="92.0" width="3.1" height="1.200" fill="#569cd6" opacity=".55"/>
<rect x="41.2" y="92.0" width="7.2" height="1.200" fill="#9cdcfe" opacity=".55"/>
<rect x="49.4" y="92.0" width="2.1" height="1.200" fill="#d4d4d4" opacity=".55"/>
<rect x="52.5" y="92.0" width="5.2" height="1.200" fill="#ce9178" opacity=".55"/>
<rect x="12.4" y="94.0" width="13.4" height="1.200" fill="#9cdcfe" opacity=".55"/>
<rect x="26.8" y="94.0" width="1.0" height="1.200" fill="#d4d4d4" opacity=".55"/>
<rect x="28.8" y="94.0" width="2.1" height="1.200" fill="#4ec9b0" opacity=".55"/>
<rect x="31.9" y="94.0" width="12.4" height="1.200" fill="#dcdcaa" opacity=".55"/>
<rect x="45.3" y="94.0" width="14.4" height="1.200" fill="#9cdcfe" opacity=".55"/>
<rect x="12.4" y="96.0" width="2.1" height="1.200" fill="#c586c0" opacity=".55"/>
<rect x="15.5" y="96.0" width="3.1" height="1.200" fill="#569cd6" opacity=".55"/>
<rect x="19.6" y="96.0" width="2.1" height="1.200" fill="#4ec9b0" opacity=".55"/>
<rect x="22.7" y="96.0" width="26.8" height="1.200" fill="#9cdcfe" opacity=".55"/>
<rect x="16.5" y="98.0" width="5.2" height="1.200" fill="#c586c0" opacity=".55"/>
<rect x="22.7" y="98.0" width="17.5" height="1.200" fill="#4ec9b0" opacity=".55"/>
<rect x="41.2" y="98.0" width="14.4" height="1.200" fill="#9cdcfe" opacity=".55"/>
<rect x="56.6" y="98.0" width="20.6" height="1.200" fill="#ce9178" opacity=".55"/>
<rect x="4.1" y="102.0" width="5.2" height="1.200" fill="#569cd6" opacity=".55"/>
<rect x="10.3" y="102.0" width="3.1" height="1.200" fill="#569cd6" opacity=".55"/>
<rect x="14.4" y="102.0" width="20.6" height="1.200" fill="#dcdcaa" opacity=".55"/>
<rect x="36.1" y="102.0" width="4.1" height="1.200" fill="#9cdcfe" opacity=".55"/>
<rect x="42.2" y="102.0" width="2.1" height="1.200" fill="#d4d4d4" opacity=".55"/>
<rect x="45.3" y="102.0" width="4.1" height="1.200" fill="#569cd6" opacity=".55"/>
<rect x="8.2" y="104.0" width="61.8" height="1.200" fill="#ce9178" opacity=".55"/>
<rect x="8.2" y="108.0" width="82.4" height="1.200" fill="#ce9178" opacity=".55"/>
<rect x="8.2" y="110.0" width="83.4" height="1.200" fill="#ce9178" opacity=".55"/>
<rect x="8.2" y="112.0" width="30.9" height="1.200" fill="#ce9178" opacity=".55"/>
<rect x="8.2" y="116.0" width="45.3" height="1.200" fill="#ce9178" opacity=".55"/>
<rect x="8.2" y="118.0" width="63.9" height="1.200" fill="#ce9178" opacity=".55"/>
<rect x="8.2" y="120.0" width="69.0" height="1.200" fill="#ce9178" opacity=".55"/>
<rect x="8.2" y="122.0" width="33.0" height="1.200" fill="#ce9178" opacity=".55"/>
<rect x="8.2" y="124.0" width="43.3" height="1.200" fill="#ce9178" opacity=".55"/>
<rect x="8.2" y="126.0" width="3.1" height="1.200" fill="#ce9178" opacity=".55"/>
<rect x="8.2" y="130.0" width="3.1" height="1.200" fill="#c586c0" opacity=".55"/>
<rect x="12.4" y="132.0" width="7.2" height="1.200" fill="#9cdcfe" opacity=".55"/>
<rect x="19.6" y="131.8" width="6.2" height="1.600" fill="#e8940f"/>
<rect x="26.8" y="132.0" width="1.0" height="1.200" fill="#d4d4d4" opacity=".55"/>
<rect x="28.8" y="132.0" width="5.2" height="1.200" fill="#c586c0" opacity=".55"/>
<rect x="35.0" y="132.0" width="4.1" height="1.200" fill="#9cdcfe" opacity=".55"/>
<rect x="40.2" y="131.8" width="11.3" height="1.600" fill="#5a5a5a"/>
<rect x="51.5" y="131.8" width="6.2" height="1.600" fill="#e8940f"/>
<rect x="57.7" y="132.0" width="2.1" height="1.200" fill="#dcdcaa" opacity=".55"/>
<rect x="12.4" y="134.0" width="13.4" height="1.200" fill="#9cdcfe" opacity=".55"/>
<rect x="27.8" y="134.0" width="1.0" height="1.200" fill="#d4d4d4" opacity=".55"/>
<rect x="29.9" y="134.0" width="5.2" height="1.200" fill="#c586c0" opacity=".55"/>
<rect x="36.1" y="134.0" width="4.1" height="1.200" fill="#9cdcfe" opacity=".55"/>
<rect x="41.2" y="134.0" width="12.4" height="1.200" fill="#dcdcaa" opacity=".55"/>
<rect x="54.6" y="134.0" width="20.6" height="1.200" fill="#9cdcfe" opacity=".55"/>
<rect x="16.5" y="136.0" width="20.6" height="1.200" fill="#d4d4d4" opacity=".55"/>
<rect x="37.1" y="135.8" width="6.2" height="1.600" fill="#e8940f"/>
<rect x="12.4" y="138.0" width="1.0" height="1.200" fill="#dcdcaa" opacity=".55"/>
<rect x="12.4" y="140.0" width="4.1" height="1.200" fill="#9cdcfe" opacity=".55"/>
<rect x="17.5" y="140.0" width="5.2" height="1.200" fill="#9cdcfe" opacity=".55"/>
<rect x="23.7" y="140.0" width="1.0" height="1.200" fill="#d4d4d4" opacity=".55"/>
<rect x="25.8" y="140.0" width="13.4" height="1.200" fill="#9cdcfe" opacity=".55"/>
<rect x="12.4" y="142.0" width="4.1" height="1.200" fill="#9cdcfe" opacity=".55"/>
<rect x="17.5" y="142.0" width="7.2" height="1.200" fill="#9cdcfe" opacity=".55"/>
<rect x="25.8" y="142.0" width="1.0" height="1.200" fill="#d4d4d4" opacity=".55"/>
<rect x="27.8" y="142.0" width="5.2" height="1.200" fill="#c586c0" opacity=".55"/>
<rect x="34.0" y="142.0" width="4.1" height="1.200" fill="#9cdcfe" opacity=".55"/>
<rect x="39.1" y="142.0" width="12.4" height="1.200" fill="#dcdcaa" opacity=".55"/>
<rect x="52.5" y="142.0" width="20.6" height="1.200" fill="#9cdcfe" opacity=".55"/>
<rect x="16.5" y="144.0" width="14.4" height="1.200" fill="#d4d4d4" opacity=".55"/>
<rect x="31.9" y="144.0" width="4.1" height="1.200" fill="#9cdcfe" opacity=".55"/>
<rect x="37.1" y="144.0" width="5.2" height="1.200" fill="#9cdcfe" opacity=".55"/>
<rect x="12.4" y="146.0" width="1.0" height="1.200" fill="#dcdcaa" opacity=".55"/>
<rect x="12.4" y="148.0" width="5.2" height="1.200" fill="#c586c0" opacity=".55"/>
<rect x="18.5" y="148.0" width="4.1" height="1.200" fill="#9cdcfe" opacity=".55"/>
<rect x="23.7" y="148.0" width="20.6" height="1.200" fill="#dcdcaa" opacity=".55"/>
<rect x="12.4" y="150.0" width="2.1" height="1.200" fill="#c586c0" opacity=".55"/>
<rect x="15.5" y="150.0" width="2.1" height="1.200" fill="#569cd6" opacity=".55"/>
<rect x="18.5" y="150.0" width="11.3" height="1.200" fill="#9cdcfe" opacity=".55"/>
<rect x="16.5" y="152.0" width="5.2" height="1.200" fill="#c586c0" opacity=".55"/>
<rect x="22.7" y="152.0" width="4.1" height="1.200" fill="#9cdcfe" opacity=".55"/>
<rect x="27.8" y="152.0" width="12.4" height="1.200" fill="#dcdcaa" opacity=".55"/>
<rect x="8.2" y="154.0" width="6.2" height="1.200" fill="#c586c0" opacity=".55"/>
<rect x="15.5" y="154.0" width="17.5" height="1.200" fill="#4ec9b0" opacity=".55"/>
<rect x="34.0" y="154.0" width="2.1" height="1.200" fill="#c586c0" opacity=".55"/>
<rect x="37.1" y="154.0" width="1.0" height="1.200" fill="#9cdcfe" opacity=".55"/>
<rect x="12.4" y="156.0" width="55.6" height="1.200" fill="#6a9955" opacity=".55"/>
<rect x="12.4" y="158.0" width="6.2" height="1.200" fill="#9cdcfe" opacity=".55"/>
<rect x="19.6" y="158.0" width="5.2" height="1.200" fill="#dcdcaa" opacity=".55"/>
<rect x="25.8" y="158.0" width="30.9" height="1.200" fill="#ce9178" opacity=".55"/>
<rect x="56.6" y="158.0" width="10.3" height="1.200" fill="#9cdcfe" opacity=".55"/>
<rect x="68.0" y="158.0" width="4.1" height="1.200" fill="#9cdcfe" opacity=".55"/>
<rect x="12.4" y="160.0" width="5.2" height="1.200" fill="#c586c0" opacity=".55"/>
<rect x="18.5" y="160.0" width="4.1" height="1.200" fill="#9cdcfe" opacity=".55"/>
<rect x="23.7" y="160.0" width="9.3" height="1.200" fill="#dcdcaa" opacity=".55"/>
<rect x="12.4" y="162.0" width="5.2" height="1.200" fill="#c586c0" opacity=".55"/>
<rect x="8.2" y="164.0" width="6.2" height="1.200" fill="#c586c0" opacity=".55"/>
<rect x="15.5" y="164.0" width="9.3" height="1.200" fill="#4ec9b0" opacity=".55"/>
<rect x="25.8" y="164.0" width="2.1" height="1.200" fill="#c586c0" opacity=".55"/>
<rect x="28.8" y="164.0" width="1.0" height="1.200" fill="#9cdcfe" opacity=".55"/>
<rect x="12.4" y="166.0" width="6.2" height="1.200" fill="#9cdcfe" opacity=".55"/>
<rect x="19.6" y="166.0" width="5.2" height="1.200" fill="#dcdcaa" opacity=".55"/>
<rect x="25.8" y="166.0" width="28.8" height="1.200" fill="#ce9178" opacity=".55"/>
<rect x="54.6" y="166.0" width="10.3" height="1.200" fill="#9cdcfe" opacity=".55"/>
<rect x="65.9" y="166.0" width="4.1" height="1.200" fill="#9cdcfe" opacity=".55"/>
<rect x="12.4" y="168.0" width="5.2" height="1.200" fill="#c586c0" opacity=".55"/>
<rect x="18.5" y="168.0" width="4.1" height="1.200" fill="#9cdcfe" opacity=".55"/>
<rect x="23.7" y="168.0" width="9.3" height="1.200" fill="#dcdcaa" opacity=".55"/>
<rect x="12.4" y="170.0" width="5.2" height="1.200" fill="#c586c0" opacity=".55"/>
<rect x="18.5" y="170.0" width="9.3" height="1.200" fill="#4ec9b0" opacity=".55"/>
<rect x="28.8" y="170.0" width="8.2" height="1.200" fill="#ce9178" opacity=".55"/>
<rect x="38.1" y="170.0" width="10.3" height="1.200" fill="#9cdcfe" opacity=".55"/>
<rect x="49.4" y="170.0" width="8.2" height="1.200" fill="#ce9178" opacity=".55"/>
<rect x="4.1" y="174.0" width="5.2" height="1.200" fill="#569cd6" opacity=".55"/>
<rect x="10.3" y="174.0" width="3.1" height="1.200" fill="#569cd6" opacity=".55"/>
<rect x="14.4" y="174.0" width="9.3" height="1.200" fill="#dcdcaa" opacity=".55"/>
<rect x="23.7" y="174.0" width="1.0" height="1.200" fill="#ffd700" opacity=".55"/>
<rect x="24.7" y="174.0" width="4.1" height="1.200" fill="#9cdcfe" opacity=".55"/>
<rect x="28.8" y="174.0" width="1.0" height="1.200" fill="#d4d4d4" opacity=".55"/>
<rect x="30.9" y="174.0" width="9.3" height="1.200" fill="#9cdcfe" opacity=".55"/>
<rect x="40.2" y="174.0" width="1.0" height="1.200" fill="#d4d4d4" opacity=".55"/>
<rect x="42.2" y="174.0" width="9.3" height="1.200" fill="#9cdcfe" opacity=".55"/>
<rect x="51.5" y="174.0" width="1.0" height="1.200" fill="#d4d4d4" opacity=".55"/>
<rect x="53.6" y="174.0" width="7.2" height="1.200" fill="#9cdcfe" opacity=".55"/>
<rect x="60.8" y="174.0" width="1.0" height="1.200" fill="#d4d4d4" opacity=".55"/>
<rect x="61.8" y="174.0" width="4.1" height="1.200" fill="#569cd6" opacity=".55"/>
<rect x="65.9" y="174.0" width="1.0" height="1.200" fill="#ffd700" opacity=".55"/>
<rect x="67.0" y="174.0" width="1.0" height="1.200" fill="#d4d4d4" opacity=".55"/>
<rect x="8.2" y="176.0" width="7.2" height="1.200" fill="#9cdcfe" opacity=".55"/>
<rect x="15.5" y="175.8" width="6.2" height="1.600" fill="#e8940f"/>
<rect x="22.7" y="176.0" width="1.0" height="1.200" fill="#d4d4d4" opacity=".55"/>
<rect x="24.7" y="176.0" width="5.2" height="1.200" fill="#c586c0" opacity=".55"/>
<rect x="30.9" y="176.0" width="4.1" height="1.200" fill="#9cdcfe" opacity=".55"/>
<rect x="35.0" y="176.0" width="1.0" height="1.200" fill="#d4d4d4" opacity=".55"/>
<rect x="36.1" y="175.8" width="11.3" height="1.600" fill="#5a5a5a"/>
<rect x="47.4" y="175.8" width="6.2" height="1.600" fill="#e8940f"/>
<rect x="53.6" y="176.0" width="2.1" height="1.200" fill="#ffd700" opacity=".55"/>
<rect x="8.2" y="178.0" width="5.2" height="1.200" fill="#c586c0" opacity=".55"/>
<rect x="14.4" y="178.0" width="4.1" height="1.200" fill="#c586c0" opacity=".55"/>
<rect x="19.6" y="178.0" width="12.4" height="1.200" fill="#d4d4d4" opacity=".55"/>
<rect x="31.9" y="178.0" width="1.0" height="1.200" fill="#ffd700" opacity=".55"/>
<rect x="33.0" y="178.0" width="7.2" height="1.200" fill="#9cdcfe" opacity=".55"/>
<rect x="40.2" y="177.8" width="6.2" height="1.600" fill="#e8940f"/>
<rect x="46.4" y="178.0" width="1.0" height="1.200" fill="#ffd700" opacity=".55"/>
<rect x="48.4" y="178.0" width="2.1" height="1.200" fill="#c586c0" opacity=".55"/>
<rect x="51.5" y="178.0" width="7.2" height="1.200" fill="#9cdcfe" opacity=".55"/>
<rect x="58.7" y="178.0" width="1.0" height="1.200" fill="#d4d4d4" opacity=".55"/>
<rect x="12.4" y="180.0" width="5.2" height="1.200" fill="#c586c0" opacity=".55"/>
<rect x="18.5" y="180.0" width="4.1" height="1.200" fill="#c586c0" opacity=".55"/>
<rect x="23.7" y="180.0" width="13.4" height="1.200" fill="#d4d4d4" opacity=".55"/>
<rect x="37.1" y="180.0" width="1.0" height="1.200" fill="#ffd700" opacity=".55"/>
<rect x="38.1" y="180.0" width="1.0" height="1.200" fill="#d4d4d4" opacity=".55"/>
<rect x="39.1" y="180.0" width="7.2" height="1.200" fill="#9cdcfe" opacity=".55"/>
<rect x="46.4" y="180.0" width="1.0" height="1.200" fill="#ffd700" opacity=".55"/>
<rect x="48.4" y="180.0" width="2.1" height="1.200" fill="#c586c0" opacity=".55"/>
<rect x="51.5" y="180.0" width="7.2" height="1.200" fill="#9cdcfe" opacity=".55"/>
<rect x="58.7" y="180.0" width="1.0" height="1.200" fill="#d4d4d4" opacity=".55"/>
<rect x="16.5" y="182.0" width="5.2" height="1.200" fill="#c586c0" opacity=".55"/>
<rect x="22.7" y="182.0" width="7.2" height="1.200" fill="#9cdcfe" opacity=".55"/>
<rect x="29.9" y="182.0" width="1.0" height="1.200" fill="#d4d4d4" opacity=".55"/>
<rect x="30.9" y="182.0" width="10.3" height="1.200" fill="#dcdcaa" opacity=".55"/>
<rect x="41.2" y="182.0" width="2.1" height="1.200" fill="#ffd700" opacity=".55"/>
<rect x="16.5" y="184.0" width="6.2" height="1.200" fill="#c586c0" opacity=".55"/>
<rect x="23.7" y="184.0" width="5.2" height="1.200" fill="#c586c0" opacity=".55"/>
<rect x="29.9" y="184.0" width="7.2" height="1.200" fill="#9cdcfe" opacity=".55"/>
<rect x="37.1" y="184.0" width="1.0" height="1.200" fill="#d4d4d4" opacity=".55"/>
<rect x="38.1" y="184.0" width="9.3" height="1.200" fill="#dcdcaa" opacity=".55"/>
<rect x="47.4" y="184.0" width="1.0" height="1.200" fill="#ffd700" opacity=".55"/>
<rect x="48.4" y="184.0" width="9.3" height="1.200" fill="#9cdcfe" opacity=".55"/>
<rect x="57.7" y="184.0" width="1.0" height="1.200" fill="#d4d4d4" opacity=".55"/>
<rect x="59.7" y="184.0" width="9.3" height="1.200" fill="#9cdcfe" opacity=".55"/>
<rect x="69.0" y="184.0" width="1.0" height="1.200" fill="#ffd700" opacity=".55"/>
<rect x="4.1" y="188.0" width="5.2" height="1.200" fill="#569cd6" opacity=".55"/>
<rect x="10.3" y="188.0" width="3.1" height="1.200" fill="#569cd6" opacity=".55"/>
<rect x="14.4" y="187.8" width="11.3" height="1.600" fill="#5a5a5a"/>
<rect x="25.8" y="187.8" width="6.2" height="1.600" fill="#e8940f"/>
<rect x="31.9" y="188.0" width="1.0" height="1.200" fill="#ffd700" opacity=".55"/>
<rect x="33.0" y="188.0" width="4.1" height="1.200" fill="#9cdcfe" opacity=".55"/>
<rect x="37.1" y="188.0" width="1.0" height="1.200" fill="#ffd700" opacity=".55"/>
<rect x="38.1" y="188.0" width="1.0" height="1.200" fill="#d4d4d4" opacity=".55"/>
<rect x="8.2" y="190.0" width="7.2" height="1.200" fill="#9cdcfe" opacity=".55"/>
<rect x="16.5" y="190.0" width="1.0" height="1.200" fill="#d4d4d4" opacity=".55"/>
<rect x="18.5" y="190.0" width="1.0" height="1.200" fill="#ffd700" opacity=".55"/>
<rect x="12.4" y="192.0" width="6.2" height="1.200" fill="#4ec9b0" opacity=".55"/>
<rect x="18.5" y="192.0" width="1.0" height="1.200" fill="#d4d4d4" opacity=".55"/>
<rect x="19.6" y="192.0" width="5.2" height="1.200" fill="#dcdcaa" opacity=".55"/>
<rect x="24.7" y="192.0" width="1.0" height="1.200" fill="#da70d6" opacity=".55"/>
<rect x="25.8" y="192.0" width="5.2" height="1.200" fill="#ce9178" opacity=".55"/>
<rect x="30.9" y="192.0" width="1.0" height="1.200" fill="#da70d6" opacity=".55"/>
<rect x="12.4" y="194.0" width="2.1" height="1.200" fill="#c586c0" opacity=".55"/>
<rect x="15.5" y="194.0" width="4.1" height="1.200" fill="#9cdcfe" opacity=".55"/>
<rect x="19.6" y="194.0" width="1.0" height="1.200" fill="#d4d4d4" opacity=".55"/>
<rect x="20.6" y="193.8" width="6.2" height="1.600" fill="#e8940f"/>
<rect x="26.8" y="194.0" width="1.0" height="1.200" fill="#da70d6" opacity=".55"/>
<rect x="27.8" y="194.0" width="9.3" height="1.200" fill="#ce9178" opacity=".55"/>
<rect x="37.1" y="194.0" width="1.0" height="1.200" fill="#da70d6" opacity=".55"/>
<rect x="39.1" y="194.0" width="2.1" height="1.200" fill="#d4d4d4" opacity=".55"/>
<rect x="42.2" y="194.0" width="5.2" height="1.200" fill="#ce9178" opacity=".55"/>
<rect x="12.4" y="196.0" width="4.1" height="1.200" fill="#c586c0" opacity=".55"/>
<rect x="17.5" y="196.0" width="4.1" height="1.200" fill="#9cdcfe" opacity=".55"/>
<rect x="21.6" y="196.0" width="1.0" height="1.200" fill="#d4d4d4" opacity=".55"/>
<rect x="22.7" y="195.8" width="6.2" height="1.600" fill="#e8940f"/>
<rect x="28.8" y="196.0" width="1.0" height="1.200" fill="#da70d6" opacity=".55"/>
<rect x="29.9" y="196.0" width="9.3" height="1.200" fill="#ce9178" opacity=".55"/>
<rect x="39.1" y="196.0" width="1.0" height="1.200" fill="#da70d6" opacity=".55"/>
<rect x="8.2" y="198.0" width="1.0" height="1.200" fill="#ffd700" opacity=".55"/>
<rect x="8.2" y="200.0" width="2.1" height="1.200" fill="#c586c0" opacity=".55"/>
<rect x="11.3" y="200.0" width="7.2" height="1.200" fill="#9cdcfe" opacity=".55"/>
<rect x="19.6" y="200.0" width="2.1" height="1.200" fill="#569cd6" opacity=".55"/>
<rect x="22.7" y="200.0" width="4.1" height="1.200" fill="#569cd6" opacity=".55"/>
<rect x="26.8" y="200.0" width="1.0" height="1.200" fill="#d4d4d4" opacity=".55"/>
<rect x="12.4" y="202.0" width="5.2" height="1.200" fill="#c586c0" opacity=".55"/>
<rect x="18.5" y="202.0" width="10.3" height="1.200" fill="#4ec9b0" opacity=".55"/>
<rect x="28.8" y="202.0" width="1.0" height="1.200" fill="#ffd700" opacity=".55"/>
<rect x="29.9" y="202.0" width="57.7" height="1.200" fill="#ce9178" opacity=".55"/>
<rect x="87.5" y="202.0" width="1.0" height="1.200" fill="#ffd700" opacity=".55"/>
<rect x="8.2" y="206.0" width="4.1" height="1.200" fill="#9cdcfe" opacity=".55"/>
<rect x="13.4" y="206.0" width="1.0" height="1.200" fill="#d4d4d4" opacity=".55"/>
<rect x="15.5" y="206.0" width="4.1" height="1.200" fill="#9cdcfe" opacity=".55"/>
<rect x="19.6" y="206.0" width="1.0" height="1.200" fill="#d4d4d4" opacity=".55"/>
<rect x="20.6" y="205.8" width="6.2" height="1.600" fill="#e8940f"/>
<rect x="26.8" y="206.0" width="1.0" height="1.200" fill="#ffd700" opacity=".55"/>
<rect x="27.8" y="206.0" width="6.2" height="1.200" fill="#ce9178" opacity=".55"/>
<rect x="34.0" y="206.0" width="1.0" height="1.200" fill="#ffd700" opacity=".55"/>
<rect x="8.2" y="208.0" width="5.2" height="1.200" fill="#c586c0" opacity=".55"/>
<rect x="14.4" y="208.0" width="4.1" height="1.200" fill="#9cdcfe" opacity=".55"/>
<rect x="18.5" y="208.0" width="1.0" height="1.200" fill="#d4d4d4" opacity=".55"/>
<rect x="19.6" y="208.0" width="25.8" height="1.200" fill="#dcdcaa" opacity=".55"/>
<rect x="45.3" y="208.0" width="1.0" height="1.200" fill="#ffd700" opacity=".55"/>
<rect x="46.4" y="208.0" width="4.1" height="1.200" fill="#9cdcfe" opacity=".55"/>
<rect x="50.5" y="208.0" width="1.0" height="1.200" fill="#ffd700" opacity=".55"/>
<rect x="8.2" y="210.0" width="2.1" height="1.200" fill="#c586c0" opacity=".55"/>
<rect x="11.3" y="210.0" width="4.1" height="1.200" fill="#9cdcfe" opacity=".55"/>
<rect x="15.5" y="210.0" width="1.0" height="1.200" fill="#ffd700" opacity=".55"/>
<rect x="16.5" y="210.0" width="1.0" height="1.200" fill="#b5cea8" opacity=".55"/>
<rect x="17.5" y="210.0" width="1.0" height="1.200" fill="#ffd700" opacity=".55"/>
<rect x="19.6" y="210.0" width="2.1" height="1.200" fill="#d4d4d4" opacity=".55"/>
<rect x="22.7" y="210.0" width="13.4" height="1.200" fill="#ce9178" opacity=".55"/>
<rect x="37.1" y="210.0" width="3.1" height="1.200" fill="#569cd6" opacity=".55"/>
<rect x="41.2" y="210.0" width="4.1" height="1.200" fill="#9cdcfe" opacity=".55"/>
<rect x="45.3" y="210.0" width="1.0" height="1.200" fill="#ffd700" opacity=".55"/>
<rect x="46.4" y="210.0" width="1.0" height="1.200" fill="#b5cea8" opacity=".55"/>
<rect x="47.4" y="210.0" width="1.0" height="1.200" fill="#ffd700" opacity=".55"/>
<rect x="49.4" y="210.0" width="2.1" height="1.200" fill="#d4d4d4" opacity=".55"/>
<rect x="52.5" y="210.0" width="5.2" height="1.200" fill="#ce9178" opacity=".55"/>
<rect x="57.7" y="210.0" width="1.0" height="1.200" fill="#d4d4d4" opacity=".55"/>
<rect x="12.4" y="212.0" width="13.4" height="1.200" fill="#9cdcfe" opacity=".55"/>
<rect x="26.8" y="212.0" width="1.0" height="1.200" fill="#d4d4d4" opacity=".55"/>
<rect x="28.8" y="212.0" width="2.1" height="1.200" fill="#4ec9b0" opacity=".55"/>
<rect x="30.9" y="212.0" width="1.0" height="1.200" fill="#d4d4d4" opacity=".55"/>
<rect x="31.9" y="212.0" width="4.1" height="1.200" fill="#9cdcfe" opacity=".55"/>
<rect x="36.1" y="212.0" width="1.0" height="1.200" fill="#d4d4d4" opacity=".55"/>
<rect x="37.1" y="212.0" width="4.1" height="1.200" fill="#dcdcaa" opacity=".55"/>
<rect x="41.2" y="212.0" width="1.0" height="1.200" fill="#ffd700" opacity=".55"/>
<rect x="42.2" y="212.0" width="4.1" height="1.200" fill="#9cdcfe" opacity=".55"/>
<rect x="46.4" y="212.0" width="1.0" height="1.200" fill="#da70d6" opacity=".55"/>
<rect x="47.4" y="212.0" width="1.0" height="1.200" fill="#b5cea8" opacity=".55"/>
<rect x="48.4" y="212.0" width="1.0" height="1.200" fill="#da70d6" opacity=".55"/>
<rect x="49.4" y="212.0" width="1.0" height="1.200" fill="#d4d4d4" opacity=".55"/>
<rect x="51.5" y="212.0" width="4.1" height="1.200" fill="#9cdcfe" opacity=".55"/>
<rect x="55.6" y="212.0" width="1.0" height="1.200" fill="#da70d6" opacity=".55"/>
<rect x="56.6" y="212.0" width="1.0" height="1.200" fill="#b5cea8" opacity=".55"/>
<rect x="57.7" y="212.0" width="1.0" height="1.200" fill="#da70d6" opacity=".55"/>
<rect x="58.7" y="212.0" width="1.0" height="1.200" fill="#ffd700" opacity=".55"/>
<rect x="12.4" y="214.0" width="2.1" height="1.200" fill="#c586c0" opacity=".55"/>
<rect x="15.5" y="214.0" width="3.1" height="1.200" fill="#569cd6" opacity=".55"/>
<rect x="19.6" y="214.0" width="2.1" height="1.200" fill="#4ec9b0" opacity=".55"/>
<rect x="21.6" y="214.0" width="1.0" height="1.200" fill="#d4d4d4" opacity=".55"/>
<rect x="22.7" y="214.0" width="4.1" height="1.200" fill="#9cdcfe" opacity=".55"/>
<rect x="26.8" y="214.0" width="1.0" height="1.200" fill="#d4d4d4" opacity=".55"/>
<rect x="27.8" y="214.0" width="6.2" height="1.200" fill="#dcdcaa" opacity=".55"/>
<rect x="34.0" y="214.0" width="1.0" height="1.200" fill="#ffd700" opacity=".55"/>
<rect x="35.0" y="214.0" width="13.4" height="1.200" fill="#9cdcfe" opacity=".55"/>
<rect x="48.4" y="214.0" width="1.0" height="1.200" fill="#ffd700" opacity=".55"/>
<rect x="49.4" y="214.0" width="1.0" height="1.200" fill="#d4d4d4" opacity=".55"/>
<rect x="16.5" y="216.0" width="5.2" height="1.200" fill="#c586c0" opacity=".55"/>
<rect x="22.7" y="216.0" width="17.5" height="1.200" fill="#4ec9b0" opacity=".55"/>
<rect x="40.2" y="216.0" width="1.0" height="1.200" fill="#ffd700" opacity=".55"/>
<rect x="41.2" y="216.0" width="1.0" height="1.200" fill="#569cd6" opacity=".55"/>
<rect x="42.2" y="216.0" width="1.0" height="1.200" fill="#ce9178" opacity=".55"/>
<rect x="43.3" y="216.0" width="1.0" height="1.200" fill="#da70d6" opacity=".55"/>
<rect x="44.3" y="216.0" width="13.4" height="1.200" fill="#9cdcfe" opacity=".55"/>
<rect x="57.7" y="216.0" width="1.0" height="1.200" fill="#da70d6" opacity=".55"/>
<rect x="59.7" y="216.0" width="16.5" height="1.200" fill="#ce9178" opacity=".55"/>
<rect x="76.2" y="216.0" width="1.0" height="1.200" fill="#ffd700" opacity=".55"/>
<rect x="8.2" y="218.0" width="7.2" height="1.200" fill="#9cdcfe" opacity=".55"/>
<rect x="15.5" y="217.8" width="6.2" height="1.600" fill="#e8940f"/>
<rect x="22.7" y="218.0" width="1.0" height="1.200" fill="#d4d4d4" opacity=".55"/>
<rect x="24.7" y="218.0" width="21.6" height="1.200" fill="#d4d4d4" opacity=".55"/>
<rect x="46.4" y="218.0" width="1.0" height="1.200" fill="#ffd700" opacity=".55"/>
<rect x="12.4" y="220.0" width="7.2" height="1.200" fill="#9cdcfe" opacity=".55"/>
<rect x="19.6" y="220.0" width="1.0" height="1.200" fill="#d4d4d4" opacity=".55"/>
<rect x="20.6" y="220.0" width="7.2" height="1.200" fill="#9cdcfe" opacity=".55"/>
<rect x="27.8" y="220.0" width="1.0" height="1.200" fill="#d4d4d4" opacity=".55"/>
<rect x="12.4" y="222.0" width="4.1" height="1.200" fill="#9cdcfe" opacity=".55"/>
<rect x="16.5" y="222.0" width="1.0" height="1.200" fill="#d4d4d4" opacity=".55"/>
<rect x="17.5" y="222.0" width="4.1" height="1.200" fill="#9cdcfe" opacity=".55"/>
<rect x="21.6" y="222.0" width="1.0" height="1.200" fill="#d4d4d4" opacity=".55"/>
<rect x="12.4" y="224.0" width="3.1" height="1.200" fill="#9cdcfe" opacity=".55"/>
<rect x="15.5" y="224.0" width="1.0" height="1.200" fill="#d4d4d4" opacity=".55"/>
<rect x="16.5" y="224.0" width="1.0" height="1.200" fill="#da70d6" opacity=".55"/>
<rect x="17.5" y="224.0" width="2.1" height="1.200" fill="#d4d4d4" opacity=".55"/>
<rect x="19.6" y="224.0" width="2.1" height="1.200" fill="#4ec9b0" opacity=".55"/>
<rect x="21.6" y="224.0" width="1.0" height="1.200" fill="#d4d4d4" opacity=".55"/>
<rect x="22.7" y="224.0" width="7.2" height="1.200" fill="#9cdcfe" opacity=".55"/>
<rect x="29.9" y="224.0" width="1.0" height="1.200" fill="#d4d4d4" opacity=".55"/>
<rect x="31.9" y="224.0" width="2.1" height="1.200" fill="#d4d4d4" opacity=".55"/>
<rect x="34.0" y="224.0" width="4.1" height="1.200" fill="#9cdcfe" opacity=".55"/>
<rect x="38.1" y="224.0" width="1.0" height="1.200" fill="#d4d4d4" opacity=".55"/>
<rect x="39.1" y="223.8" width="6.2" height="1.600" fill="#e8940f"/>
<rect x="45.3" y="224.0" width="1.0" height="1.200" fill="#179fff" opacity=".55"/>
<rect x="46.4" y="224.0" width="5.2" height="1.200" fill="#ce9178" opacity=".55"/>
<rect x="51.5" y="224.0" width="1.0" height="1.200" fill="#179fff" opacity=".55"/>
<rect x="52.5" y="224.0" width="1.0" height="1.200" fill="#da70d6" opacity=".55"/>
<rect x="12.4" y="226.0" width="2.1" height="1.200" fill="#c586c0" opacity=".55"/>
<rect x="15.5" y="226.0" width="4.1" height="1.200" fill="#9cdcfe" opacity=".55"/>
<rect x="19.6" y="226.0" width="1.0" height="1.200" fill="#d4d4d4" opacity=".55"/>
<rect x="20.6" y="225.8" width="6.2" height="1.600" fill="#e8940f"/>
<rect x="26.8" y="226.0" width="1.0" height="1.200" fill="#d4d4d4" opacity=".55"/>
<rect x="27.8" y="226.0" width="3.1" height="1.200" fill="#dcdcaa" opacity=".55"/>
<rect x="30.9" y="226.0" width="1.0" height="1.200" fill="#da70d6" opacity=".55"/>
<rect x="31.9" y="226.0" width="5.2" height="1.200" fill="#ce9178" opacity=".55"/>
<rect x="37.1" y="226.0" width="1.0" height="1.200" fill="#da70d6" opacity=".55"/>
<rect x="12.4" y="228.0" width="4.1" height="1.200" fill="#c586c0" opacity=".55"/>
<rect x="17.5" y="228.0" width="1.0" height="1.200" fill="#da70d6" opacity=".55"/>
<rect x="18.5" y="228.0" width="2.1" height="1.200" fill="#d4d4d4" opacity=".55"/>
<rect x="20.6" y="228.0" width="2.1" height="1.200" fill="#4ec9b0" opacity=".55"/>
<rect x="22.7" y="228.0" width="1.0" height="1.200" fill="#d4d4d4" opacity=".55"/>
<rect x="23.7" y="228.0" width="7.2" height="1.200" fill="#9cdcfe" opacity=".55"/>
<rect x="30.9" y="228.0" width="1.0" height="1.200" fill="#da70d6" opacity=".55"/>
<rect x="31.9" y="228.0" width="1.0" height="1.200" fill="#d4d4d4" opacity=".55"/>
<rect x="8.2" y="230.0" width="1.0" height="1.200" fill="#ffd700" opacity=".55"/>
<rect x="8.2" y="232.0" width="6.2" height="1.200" fill="#c586c0" opacity=".55"/>
<rect x="15.5" y="232.0" width="7.2" height="1.200" fill="#9cdcfe" opacity=".55"/>
<rect x="22.7" y="231.8" width="6.2" height="1.600" fill="#e8940f"/>
</svg>
<div id="sb">
  <div class="abs" style="left:0;top:536.9px;width:20px;height:205px;background:#434343"></div>
  <div class="abs" style="left:0;top:555.800px;width:20px;height:2px;background:#a0a0a0"></div>
  <div class="abs" style="left:14px;top:90.600px;width:6px;height:19.200px;background:#d0a800"></div>
  <i class="ov" style="top:195.5px;height:8px"></i><i class="ov" style="top:213.500px;height:8px"></i>
  <i class="ov" style="top:418.500px;height:9.500px;background:#b08b50"></i><i class="ov" style="top:432px;height:9.500px;background:#7a5520"></i>
  <i class="ov" style="top:559px;height:10.700px;background:#8d6f45"></i>
  <i class="ov" style="top:593px;height:9px;background:#a08560"></i>
  <i class="ov" style="top:613px;height:13.500px;background:#8d6f45"></i>
  <i class="ov" style="top:649.600px;height:8.400px;background:#8d6f45"></i>
  <i class="ov" style="top:686.600px;height:8.400px;background:#8d6f45"></i>
  <i class="ov" style="top:706px;height:13.600px;background:#8d6f45"></i>
  <i class="ov" style="top:730.800px;height:8px;background:#8d6f45"></i>
</div>

<div id="find">
  <svg class="abs" style="left:9px;top:14px" width="14" height="20" viewBox="0 0 14 20"><path d="M3.500 3.500 10.500 10 3.500 16.500" fill="none" stroke="#c5c5c5" stroke-width="1.400"/></svg>
  <div class="inp"><span class="q">params</span>
    <span class="abs" style="left:201px;top:1px;font-size:16px;line-height:35px;color:#c5c5c5">Aa</span>
    <span class="abs" style="left:233px;top:0px;font-size:17px;line-height:35px;color:#c5c5c5">ab</span>
    <svg class="abs" style="left:230px;top:20px" width="26" height="8" viewBox="0 0 26 8"><path d="M1 1v5h24V1" fill="none" stroke="#c5c5c5" stroke-width="1.300"/></svg>
    <svg class="abs" style="left:266px;top:7px" width="22" height="22" viewBox="0 0 22 22"><rect x="2" y="14" width="5.500" height="5.500" fill="#c5c5c5"/><path d="M14 2v11M9.200 4.800l9.600 5.400M18.800 4.800l-9.600 5.400" stroke="#c5c5c5" stroke-width="1.600" fill="none"/></svg>
  </div>
  <span class="cnt">第 ? 项, 共 16 项</span>
  <svg class="abs" style="left:480.5px;top:13px" width="20" height="22" viewBox="0 0 20 22"><path d="M10 20V3M2.500 10.500 10 3l7.500 7.500" fill="none" stroke="#c5c5c5" stroke-width="1.500"/></svg>
  <svg class="abs" style="left:518px;top:13px" width="20" height="22" viewBox="0 0 20 22"><path d="M10 2v17M2.500 11.500 10 19l7.500-7.500" fill="none" stroke="#c5c5c5" stroke-width="1.500"/></svg>
  <svg class="abs" style="left:554px;top:14px" width="24" height="20" viewBox="0 0 24 20"><path d="M1 3.500h22M1 10h22M1 16.500h15" fill="none" stroke="#c5c5c5" stroke-width="1.500"/></svg>
  <svg class="abs" style="left:594px;top:16px" width="16" height="16" viewBox="0 0 16 16"><path d="M1.500 1.500 14.500 14.500M14.500 1.500 1.500 14.500" stroke="#c5c5c5" stroke-width="1.500" fill="none"/></svg>
</div>

<div id="panel">
<span class="pt" style="left:30px">问题</span><span class="pb" style="left:70px">12</span>
<span class="pt" style="left:133px">输出</span>
<span class="pt" style="left:203px">调试控制台</span>
<span class="pt" style="left:321px;color:#e7e7e7">终端</span>
<span class="pt" style="left:390px">端口</span><span class="pb" style="left:429px">11</span>
<svg class="abs" style="left:927px;top:14px" width="22" height="22" viewBox="0 0 22 22"><path d="M11 1.500v19M1.500 11h19" stroke="#cccccc" stroke-width="1.500" fill="none"/></svg>
<svg class="abs" style="left:956px;top:20px" width="14" height="12" viewBox="0 0 14 12"><path d="M1.500 3 7 8.500 12.500 3" fill="none" stroke="#cccccc" stroke-width="1.400"/></svg>
<svg class="abs" style="left:986px;top:13px" width="24" height="26" viewBox="0 0 24 26"><path d="M12 1.500 21.500 7v12L12 24.500 2.500 19V7z" fill="none" stroke="#cccccc" stroke-width="1.500" stroke-linejoin="round"/><path d="M12 13 21.500 7.500V19L12 24.500z" fill="#cccccc"/><text x="13.500" y="20.500" font-size="7" font-weight="bold" fill="#181818" font-family="Liberation Sans, sans-serif">$_</text></svg>
<span class="pt" style="left:1015.300px;color:#cccccc;font-size:17.5px;letter-spacing:-0.7px">bash - OxyGent</span>
<svg class="abs" style="left:1146px;top:15px" width="21" height="21" viewBox="0 0 21 21"><rect x="1.500" y="1.500" width="18" height="18" rx="1.500" fill="none" stroke="#cccccc" stroke-width="1.500"/><path d="M10.500 2v17" stroke="#cccccc" stroke-width="1.500"/></svg>
<svg class="abs" style="left:1184px;top:13px" width="20" height="24" viewBox="0 0 20 24"><path d="M1 5h18M7 5V2h6v3M3.500 5v16.500h13V5M8 9v9M12 9v9" fill="none" stroke="#cccccc" stroke-width="1.500"/></svg>
<svg class="abs" style="left:1223px;top:23px" width="22" height="6" viewBox="0 0 22 6"><circle cx="3" cy="3" r="1.600" fill="#cccccc"/><circle cx="11" cy="3" r="1.600" fill="#cccccc"/><circle cx="19" cy="3" r="1.600" fill="#cccccc"/></svg>
<div class="abs" style="left:1262px;top:14px;width:1px;height:24px;background:#5a5a5a"></div>
<svg class="abs" style="left:1282px;top:16px" width="21" height="20" viewBox="0 0 21 20"><path d="M1.500 7V1.500H7M14 1.500h5.500V7M19.500 13v5.500H14M7 18.500H1.500V13" fill="none" stroke="#cccccc" stroke-width="1.700"/></svg>
<svg class="abs" style="left:1324px;top:18px" width="16" height="16" viewBox="0 0 16 16"><path d="M1.500 1.500 14.500 14.500M14.500 1.500 1.500 14.500" stroke="#cccccc" stroke-width="1.500" fill="none"/></svg>

</div>
</div>
<div id="right"><span class="abs" style="left:12.800px;top:62.500px;font-size:19.500px;color:#cccccc;white-space:nowrap">[A</span></div>
<svg id="arrows" width="1769" height="1060" viewBox="0 0 1769 1060">
  <g fill="#ed1c24" stroke="none">
    <path d="M302.800 377.100 490.100 228.450" stroke="#ed1c24" stroke-width="13.500" stroke-linecap="round" fill="none"/>
    <path d="M528 198.300 469.900 213.200 485.400 222.500 494.800 234.400 499.500 251.200z"/>
    <path d="M400.500 504.100 527.250 424.100" stroke="#ed1c24" stroke-width="13.500" stroke-linecap="round" fill="none"/>
    <path d="M567.800 398.100 508.700 407.300 523.300 418.300 531.200 429.900 534.200 448z"/>
  </g>
</svg>

</body>
</html>
